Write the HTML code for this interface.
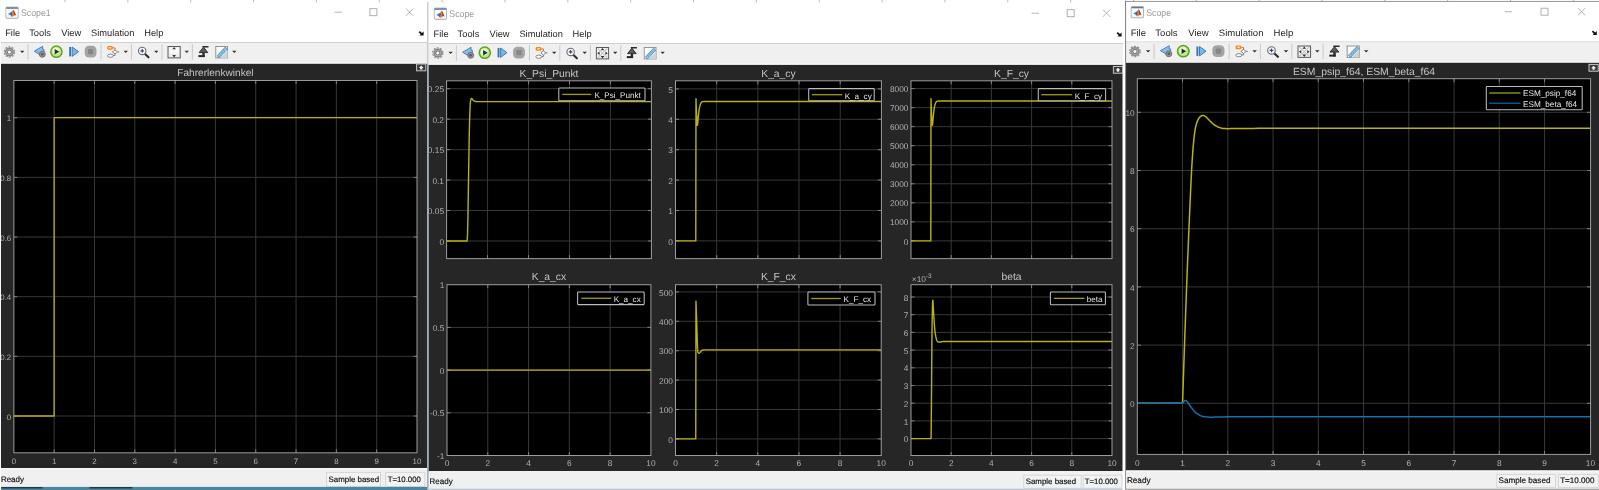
<!DOCTYPE html>
<html><head><meta charset="utf-8"><title>Scope</title>
<style>html,body{margin:0;padding:0;background:#fff;overflow:hidden}body{width:1599px;height:490px;font-family:"Liberation Sans",sans-serif}svg text{font-family:"Liberation Sans",sans-serif}</style></head>
<body>
<svg width="1599" height="490" viewBox="0 0 1599 490" font-family="Liberation Sans, sans-serif" text-rendering="geometricPrecision" style="display:block"><defs><filter id="bl" x="0" y="0" width="100%" height="100%" color-interpolation-filters="sRGB"><feGaussianBlur stdDeviation="0.52"/></filter></defs><g filter="url(#bl)">
<rect x="0.00" y="0.00" width="1599.00" height="490.00" fill="#ffffff" />
<rect x="0.00" y="0.00" width="428.00" height="43.00" fill="#ffffff" />
<rect x="5.95" y="7.10" width="12.20" height="11.20" fill="#f4f4f4" stroke="#a4a8ad" stroke-width="0.9" rx="0.6"/>
<rect x="6.45" y="9.10" width="11.20" height="6.00" fill="#ffffff" />
<rect x="6.25" y="7.30" width="11.60" height="1.50" fill="#4f7db0" />
<path d="M7.85 14.00L11.65 11.70L12.55 13.70L11.45 16.30L10.05 15.10Z" fill="#3f82c8"/>
<path d="M11.65 11.70C12.35 11.00 12.85 10.10 13.35 9.80C14.25 10.90 15.05 13.40 16.15 15.50C15.05 14.80 14.05 15.40 13.15 16.30L11.85 17.10L11.45 16.30L12.55 13.70Z" fill="#ee7a22"/>
<path d="M13.35 9.80C14.25 10.90 15.05 13.40 16.15 15.50C15.35 14.90 14.65 15.00 14.05 15.40C13.85 13.60 13.65 11.60 13.35 9.80Z" fill="#b5311c"/>
<path d="M11.45 16.30L12.55 13.70L11.65 11.70L10.85 14.50Z" fill="#2a4f9a" opacity="0.75"/>
<text transform="translate(20.90 16.00) scale(0.925 1)" font-size="9.5" fill="#9a9a9a">Scope1</text>
<line x1="334.60" y1="12.20" x2="342.00" y2="12.20" stroke="#b4b4b4" stroke-width="1" />
<rect x="369.90" y="8.70" width="7.00" height="7.00" fill="none" stroke="#a6a6a6" stroke-width="0.9"/>
<path d="M406.00 8.60l7.2 7.2M413.20 8.60l-7.2 7.2" stroke="#a8a8a8" stroke-width="0.9"/>
<g transform="translate(0.00 0) scale(1.0 1) translate(0.00 0)">
<text x="5.20" y="36.10" font-size="9.3" fill="#1e1e1e" text-anchor="start" >File</text>
<text x="29.20" y="36.10" font-size="9.3" fill="#1e1e1e" text-anchor="start" >Tools</text>
<text x="61.20" y="36.10" font-size="9.3" fill="#1e1e1e" text-anchor="start" >View</text>
<text x="91.00" y="36.10" font-size="9.3" fill="#1e1e1e" text-anchor="start" >Simulation</text>
<text x="144.20" y="36.10" font-size="9.3" fill="#1e1e1e" text-anchor="start" >Help</text>
</g>
<path d="M419.20 31.60l2.6 2.6" stroke="#111" stroke-width="1.7"/>
<path d="M423.60 31.40v4.2h-4.2z" fill="#111"/>
<rect x="0.00" y="42.00" width="428.00" height="1.00" fill="#cfcfcf" />
<rect x="0.00" y="43.00" width="428.00" height="20.20" fill="#f0f0f0" />
<rect x="0.00" y="62.40" width="428.00" height="1.00" fill="#f8f8f8" />
<g transform="translate(0.00 0) scale(1.0 1) translate(0.00 0)">
<circle cx="9.40" cy="52.00" r="5.1" fill="none" stroke="#8c8c8c" stroke-width="1.2" stroke-dasharray="2.0 1.2"/>
<circle cx="9.40" cy="52.00" r="4.5" fill="#878787"/>
<circle cx="9.40" cy="52.00" r="3.1" fill="#b9b9b9"/>
<circle cx="9.40" cy="52.00" r="2.5" fill="#7c7c7c"/>
<circle cx="9.40" cy="52.00" r="1.5" fill="#fafafa"/>
<path d="M20.00 50.70h4.4l-2.2 2.2z" fill="#333"/>
<line x1="28.00" y1="44.20" x2="28.00" y2="59.70" stroke="#c9c9c9" stroke-width="1" />
<path d="M34.20 51.20l8.5 -5v3.2h1.3v4.5h-1.3v2.6z" fill="#8dbbe6" stroke="#3f7fc0" stroke-width="0.9"/>
<circle cx="42.30" cy="54.30" r="3.0" fill="#909090" stroke="#6a6a6a" stroke-width="0.8"/>
<circle cx="42.30" cy="54.30" r="1.2" fill="#5a5a5a"/>
<circle cx="56.40" cy="51.70" r="5.6" fill="#b8e986" stroke="#5ea524" stroke-width="1.5"/>
<circle cx="55.90" cy="50.90" r="3.4" fill="#e9f9d4"/>
<path d="M54.70 49.00l4.6 2.7l-4.6 2.7z" fill="#2b2b2b"/>
<rect x="69.20" y="47.00" width="1.90" height="9.40" fill="#2f74b5" />
<path d="M72.20 47.00l6.3 4.7l-6.3 4.7z" fill="#7fb6e6" stroke="#2f74b5" stroke-width="0.9"/>
<rect x="84.70" y="45.80" width="11.80" height="11.80" fill="#a4a4a4" rx="4.2"/>
<rect x="88.00" y="49.10" width="5.20" height="5.20" fill="#868686" rx="0.8"/>
<line x1="101.00" y1="44.20" x2="101.00" y2="59.70" stroke="#c9c9c9" stroke-width="1" />
<rect x="107.30" y="46.10" width="5.60" height="3.60" fill="#f08a24" rx="1.2"/>
<rect x="108.70" y="47.00" width="2.80" height="1.40" fill="#ffd9a8" rx="0.6"/>
<path d="M113.00 47.90h2v2.6" fill="none" stroke="#d9642a" stroke-width="0.9"/>
<path d="M112.40 51.90l2.6 -2l2.6 2l-2.6 2z" fill="#fff" stroke="#6a6a6a" stroke-width="0.8"/>
<path d="M117.60 51.90h1.6" fill="none" stroke="#6a6a6a" stroke-width="0.8"/>
<path d="M115.00 53.90v1.6h-2" fill="none" stroke="#6a6a6a" stroke-width="0.8"/>
<ellipse cx="110.40" cy="55.70" rx="2.9" ry="1.6" fill="#fff" stroke="#6a6a6a" stroke-width="0.8"/>
<path d="M123.60 50.70h4.4l-2.2 2.2z" fill="#333"/>
<line x1="131.40" y1="44.20" x2="131.40" y2="59.70" stroke="#c9c9c9" stroke-width="1" />
<line x1="144.80" y1="53.70" x2="148.50" y2="57.30" stroke="#2e2e2e" stroke-width="2.1" stroke-linecap="round"/>
<circle cx="142.20" cy="50.90" r="3.7" fill="#f4f8fc" stroke="#6e6e6e" stroke-width="1.1"/>
<path d="M140.40 50.90h3.6M142.20 49.10v3.6" stroke="#3a4a66" stroke-width="1.1"/>
<path d="M154.10 50.70h4.4l-2.2 2.2z" fill="#333"/>
<line x1="162.00" y1="44.20" x2="162.00" y2="59.70" stroke="#c9c9c9" stroke-width="1" />
<rect x="168.00" y="46.50" width="12.20" height="11.40" fill="#ececec" stroke="#5c5c5c" stroke-width="1"/>
<rect x="169.20" y="47.70" width="9.80" height="6.00" fill="#fafafa" />
<path d="M174.10 47.00l1.8 2.3h-3.6zM174.10 57.40l1.8 -2.3h-3.6z" fill="#303030"/>
<path d="M184.60 50.70h4.4l-2.2 2.2z" fill="#333"/>
<line x1="192.40" y1="44.20" x2="192.40" y2="59.70" stroke="#c9c9c9" stroke-width="1" />
<rect x="202.40" y="46.00" width="6.10" height="1.50" fill="#2c2c2c" />
<path d="M203.50 47.20L207.80 52.60L199.10 52.60Z" fill="#5a5a5a" stroke="#262626" stroke-width="0.9" stroke-linejoin="round"/>
<rect x="202.30" y="52.60" width="2.40" height="4.40" fill="#2c2c2c" />
<rect x="198.40" y="55.10" width="6.30" height="2.00" fill="#262626" />
<rect x="215.80" y="46.50" width="11.80" height="11.40" fill="#fbfbfb" stroke="#8a8a8a" stroke-width="0.9"/>
<path d="M227.60 50.30v7.6h-7.6z" fill="#d2d2d2"/>
<path d="M217.00 55.90l8.2 -8.8l2.1 2l-8.2 8.8z" fill="#86c2e6" stroke="#4a88ba" stroke-width="0.8"/>
<path d="M219.60 54.30l0.9 0.9M221.50 52.30l0.9 0.9M223.40 50.30l0.9 0.9" stroke="#3d6f9c" stroke-width="0.6"/>
<path d="M232.10 50.70h4.4l-2.2 2.2z" fill="#333"/>
</g>
<rect x="1.00" y="63.80" width="426.00" height="404.20" fill="#262626" />
<rect x="13.85" y="80.50" width="403.15" height="372.30" fill="#000" />
<line x1="54.16" y1="80.50" x2="54.16" y2="452.80" stroke="#383838" stroke-width="1" />
<line x1="94.48" y1="80.50" x2="94.48" y2="452.80" stroke="#383838" stroke-width="1" />
<line x1="134.79" y1="80.50" x2="134.79" y2="452.80" stroke="#383838" stroke-width="1" />
<line x1="175.11" y1="80.50" x2="175.11" y2="452.80" stroke="#383838" stroke-width="1" />
<line x1="215.42" y1="80.50" x2="215.42" y2="452.80" stroke="#383838" stroke-width="1" />
<line x1="255.74" y1="80.50" x2="255.74" y2="452.80" stroke="#383838" stroke-width="1" />
<line x1="296.06" y1="80.50" x2="296.06" y2="452.80" stroke="#383838" stroke-width="1" />
<line x1="336.37" y1="80.50" x2="336.37" y2="452.80" stroke="#383838" stroke-width="1" />
<line x1="376.69" y1="80.50" x2="376.69" y2="452.80" stroke="#383838" stroke-width="1" />
<line x1="13.85" y1="416.00" x2="417.00" y2="416.00" stroke="#383838" stroke-width="1" />
<line x1="13.85" y1="356.34" x2="417.00" y2="356.34" stroke="#383838" stroke-width="1" />
<line x1="13.85" y1="296.68" x2="417.00" y2="296.68" stroke="#383838" stroke-width="1" />
<line x1="13.85" y1="237.02" x2="417.00" y2="237.02" stroke="#383838" stroke-width="1" />
<line x1="13.85" y1="177.36" x2="417.00" y2="177.36" stroke="#383838" stroke-width="1" />
<line x1="13.85" y1="117.70" x2="417.00" y2="117.70" stroke="#383838" stroke-width="1" />
<line x1="54.16" y1="452.80" x2="54.16" y2="449.30" stroke="#808080" stroke-width="1" />
<line x1="54.16" y1="80.50" x2="54.16" y2="84.00" stroke="#808080" stroke-width="1" />
<line x1="94.48" y1="452.80" x2="94.48" y2="449.30" stroke="#808080" stroke-width="1" />
<line x1="94.48" y1="80.50" x2="94.48" y2="84.00" stroke="#808080" stroke-width="1" />
<line x1="134.79" y1="452.80" x2="134.79" y2="449.30" stroke="#808080" stroke-width="1" />
<line x1="134.79" y1="80.50" x2="134.79" y2="84.00" stroke="#808080" stroke-width="1" />
<line x1="175.11" y1="452.80" x2="175.11" y2="449.30" stroke="#808080" stroke-width="1" />
<line x1="175.11" y1="80.50" x2="175.11" y2="84.00" stroke="#808080" stroke-width="1" />
<line x1="215.42" y1="452.80" x2="215.42" y2="449.30" stroke="#808080" stroke-width="1" />
<line x1="215.42" y1="80.50" x2="215.42" y2="84.00" stroke="#808080" stroke-width="1" />
<line x1="255.74" y1="452.80" x2="255.74" y2="449.30" stroke="#808080" stroke-width="1" />
<line x1="255.74" y1="80.50" x2="255.74" y2="84.00" stroke="#808080" stroke-width="1" />
<line x1="296.06" y1="452.80" x2="296.06" y2="449.30" stroke="#808080" stroke-width="1" />
<line x1="296.06" y1="80.50" x2="296.06" y2="84.00" stroke="#808080" stroke-width="1" />
<line x1="336.37" y1="452.80" x2="336.37" y2="449.30" stroke="#808080" stroke-width="1" />
<line x1="336.37" y1="80.50" x2="336.37" y2="84.00" stroke="#808080" stroke-width="1" />
<line x1="376.69" y1="452.80" x2="376.69" y2="449.30" stroke="#808080" stroke-width="1" />
<line x1="376.69" y1="80.50" x2="376.69" y2="84.00" stroke="#808080" stroke-width="1" />
<line x1="13.85" y1="416.00" x2="17.35" y2="416.00" stroke="#808080" stroke-width="1" />
<line x1="417.00" y1="416.00" x2="413.50" y2="416.00" stroke="#808080" stroke-width="1" />
<line x1="13.85" y1="356.34" x2="17.35" y2="356.34" stroke="#808080" stroke-width="1" />
<line x1="417.00" y1="356.34" x2="413.50" y2="356.34" stroke="#808080" stroke-width="1" />
<line x1="13.85" y1="296.68" x2="17.35" y2="296.68" stroke="#808080" stroke-width="1" />
<line x1="417.00" y1="296.68" x2="413.50" y2="296.68" stroke="#808080" stroke-width="1" />
<line x1="13.85" y1="237.02" x2="17.35" y2="237.02" stroke="#808080" stroke-width="1" />
<line x1="417.00" y1="237.02" x2="413.50" y2="237.02" stroke="#808080" stroke-width="1" />
<line x1="13.85" y1="177.36" x2="17.35" y2="177.36" stroke="#808080" stroke-width="1" />
<line x1="417.00" y1="177.36" x2="413.50" y2="177.36" stroke="#808080" stroke-width="1" />
<line x1="13.85" y1="117.70" x2="17.35" y2="117.70" stroke="#808080" stroke-width="1" />
<line x1="417.00" y1="117.70" x2="413.50" y2="117.70" stroke="#808080" stroke-width="1" />
<path d="M13.85 416.00 L54.16 416.00 L54.16 117.70 L417.00 117.70" fill="none" stroke="#bab213" stroke-width="1.3" stroke-linejoin="round"/>
<rect x="13.85" y="80.50" width="403.15" height="372.30" fill="none" stroke="#9c9c9c" stroke-width="1"/>
<text x="13.85" y="463.50" font-size="7.9" fill="#b0b0b0" text-anchor="middle" >0</text>
<text x="54.16" y="463.50" font-size="7.9" fill="#b0b0b0" text-anchor="middle" >1</text>
<text x="94.48" y="463.50" font-size="7.9" fill="#b0b0b0" text-anchor="middle" >2</text>
<text x="134.79" y="463.50" font-size="7.9" fill="#b0b0b0" text-anchor="middle" >3</text>
<text x="175.11" y="463.50" font-size="7.9" fill="#b0b0b0" text-anchor="middle" >4</text>
<text x="215.42" y="463.50" font-size="7.9" fill="#b0b0b0" text-anchor="middle" >5</text>
<text x="255.74" y="463.50" font-size="7.9" fill="#b0b0b0" text-anchor="middle" >6</text>
<text x="296.06" y="463.50" font-size="7.9" fill="#b0b0b0" text-anchor="middle" >7</text>
<text x="336.37" y="463.50" font-size="7.9" fill="#b0b0b0" text-anchor="middle" >8</text>
<text x="376.69" y="463.50" font-size="7.9" fill="#b0b0b0" text-anchor="middle" >9</text>
<text x="417.00" y="463.50" font-size="7.9" fill="#b0b0b0" text-anchor="middle" >10</text>
<text x="11.25" y="419.60" font-size="7.9" fill="#b0b0b0" text-anchor="end" >0</text>
<text x="11.25" y="359.94" font-size="7.9" fill="#b0b0b0" text-anchor="end" >0.2</text>
<text x="11.25" y="300.28" font-size="7.9" fill="#b0b0b0" text-anchor="end" >0.4</text>
<text x="11.25" y="240.62" font-size="7.9" fill="#b0b0b0" text-anchor="end" >0.6</text>
<text x="11.25" y="180.96" font-size="7.9" fill="#b0b0b0" text-anchor="end" >0.8</text>
<text x="11.25" y="121.30" font-size="7.9" fill="#b0b0b0" text-anchor="end" >1</text>
<text x="215.43" y="76.20" font-size="10.1" fill="#c4c4c4" text-anchor="middle" >Fahrerlenkwinkel</text>
<rect x="416.60" y="64.00" width="9.20" height="6.80" fill="#3a3a3a" stroke="#c6c6c6" stroke-width="1.0"/>
<path d="M418.80 67.90l2.4 -2.5l2.4 2.5h-1.3v1.5h-2.2v-1.5z" fill="#f0f0f0"/>
<rect x="0.00" y="468.20" width="428.00" height="19.00" fill="#f0f0f0" />
<rect x="0.00" y="468.20" width="428.00" height="0.90" fill="#fbfbfb" />
<text x="0.90" y="481.80" font-size="8.0" fill="#141414" text-anchor="start" stroke="#141414" stroke-width="0.18">Ready</text>
<rect x="326.60" y="472.40" width="54.00" height="14.20" fill="#f3f3f3" stroke="#d4d4d4" stroke-width="0.9"/>
<text x="328.60" y="481.80" font-size="7.9" fill="#141414" text-anchor="start" stroke="#141414" stroke-width="0.18">Sample based</text>
<rect x="385.60" y="472.40" width="39.20" height="14.20" fill="#f3f3f3" stroke="#d4d4d4" stroke-width="0.9"/>
<text x="387.70" y="481.80" font-size="7.8" fill="#141414" text-anchor="start" stroke="#141414" stroke-width="0.18">T=10.000</text>
<rect x="0.00" y="486.90" width="428.00" height="3.10" fill="#4688a4" />
<rect x="1.50" y="487.00" width="41.00" height="1.50" fill="#22384a" />
<rect x="89.50" y="487.00" width="43.00" height="1.50" fill="#22384a" />
<rect x="0.00" y="0.00" width="1.00" height="490.00" fill="#fafafa" />
<rect x="427.00" y="2.00" width="1.70" height="488.00" fill="#a3afbb" />
<rect x="427.00" y="2.00" width="1.70" height="62.00" fill="#c3ccd5" />
<rect x="428.40" y="0.00" width="694.70" height="44.00" fill="#ffffff" />
<rect x="434.35" y="8.10" width="12.20" height="11.20" fill="#f4f4f4" stroke="#a4a8ad" stroke-width="0.9" rx="0.6"/>
<rect x="434.85" y="10.10" width="11.20" height="6.00" fill="#ffffff" />
<rect x="434.65" y="8.30" width="11.60" height="1.50" fill="#4f7db0" />
<path d="M436.25 15.00L440.05 12.70L440.95 14.70L439.85 17.30L438.45 16.10Z" fill="#3f82c8"/>
<path d="M440.05 12.70C440.75 12.00 441.25 11.10 441.75 10.80C442.65 11.90 443.45 14.40 444.55 16.50C443.45 15.80 442.45 16.40 441.55 17.30L440.25 18.10L439.85 17.30L440.95 14.70Z" fill="#ee7a22"/>
<path d="M441.75 10.80C442.65 11.90 443.45 14.40 444.55 16.50C443.75 15.90 443.05 16.00 442.45 16.40C442.25 14.60 442.05 12.60 441.75 10.80Z" fill="#b5311c"/>
<path d="M439.85 17.30L440.95 14.70L440.05 12.70L439.25 15.50Z" fill="#2a4f9a" opacity="0.75"/>
<text transform="translate(449.30 17.00) scale(0.925 1)" font-size="9.5" fill="#9a9a9a">Scope</text>
<line x1="1031.60" y1="13.20" x2="1039.00" y2="13.20" stroke="#b4b4b4" stroke-width="1" />
<rect x="1067.20" y="9.70" width="7.00" height="7.00" fill="none" stroke="#a6a6a6" stroke-width="0.9"/>
<path d="M1102.90 9.60l7.2 7.2M1110.10 9.60l-7.2 7.2" stroke="#a8a8a8" stroke-width="0.9"/>
<g transform="translate(428.40 0) scale(1.0 1) translate(-428.40 0)">
<text x="433.60" y="37.10" font-size="9.3" fill="#1e1e1e" text-anchor="start" >File</text>
<text x="457.60" y="37.10" font-size="9.3" fill="#1e1e1e" text-anchor="start" >Tools</text>
<text x="489.60" y="37.10" font-size="9.3" fill="#1e1e1e" text-anchor="start" >View</text>
<text x="519.40" y="37.10" font-size="9.3" fill="#1e1e1e" text-anchor="start" >Simulation</text>
<text x="572.60" y="37.10" font-size="9.3" fill="#1e1e1e" text-anchor="start" >Help</text>
</g>
<path d="M1117.20 32.60l2.6 2.6" stroke="#111" stroke-width="1.7"/>
<path d="M1121.60 32.40v4.2h-4.2z" fill="#111"/>
<rect x="428.40" y="43.00" width="694.70" height="1.00" fill="#cfcfcf" />
<rect x="428.40" y="44.00" width="694.70" height="20.20" fill="#f0f0f0" />
<rect x="428.40" y="63.40" width="694.70" height="1.00" fill="#f8f8f8" />
<g transform="translate(428.40 0) scale(1.0 1) translate(-428.40 0)">
<circle cx="437.80" cy="53.00" r="5.1" fill="none" stroke="#8c8c8c" stroke-width="1.2" stroke-dasharray="2.0 1.2"/>
<circle cx="437.80" cy="53.00" r="4.5" fill="#878787"/>
<circle cx="437.80" cy="53.00" r="3.1" fill="#b9b9b9"/>
<circle cx="437.80" cy="53.00" r="2.5" fill="#7c7c7c"/>
<circle cx="437.80" cy="53.00" r="1.5" fill="#fafafa"/>
<path d="M448.40 51.70h4.4l-2.2 2.2z" fill="#333"/>
<line x1="456.40" y1="45.20" x2="456.40" y2="60.70" stroke="#c9c9c9" stroke-width="1" />
<path d="M462.60 52.20l8.5 -5v3.2h1.3v4.5h-1.3v2.6z" fill="#8dbbe6" stroke="#3f7fc0" stroke-width="0.9"/>
<circle cx="470.70" cy="55.30" r="3.0" fill="#909090" stroke="#6a6a6a" stroke-width="0.8"/>
<circle cx="470.70" cy="55.30" r="1.2" fill="#5a5a5a"/>
<circle cx="484.80" cy="52.70" r="5.6" fill="#b8e986" stroke="#5ea524" stroke-width="1.5"/>
<circle cx="484.30" cy="51.90" r="3.4" fill="#e9f9d4"/>
<path d="M483.10 50.00l4.6 2.7l-4.6 2.7z" fill="#2b2b2b"/>
<rect x="497.60" y="48.00" width="1.90" height="9.40" fill="#2f74b5" />
<path d="M500.60 48.00l6.3 4.7l-6.3 4.7z" fill="#7fb6e6" stroke="#2f74b5" stroke-width="0.9"/>
<rect x="513.10" y="46.80" width="11.80" height="11.80" fill="#a4a4a4" rx="4.2"/>
<rect x="516.40" y="50.10" width="5.20" height="5.20" fill="#868686" rx="0.8"/>
<line x1="529.40" y1="45.20" x2="529.40" y2="60.70" stroke="#c9c9c9" stroke-width="1" />
<rect x="535.70" y="47.10" width="5.60" height="3.60" fill="#f08a24" rx="1.2"/>
<rect x="537.10" y="48.00" width="2.80" height="1.40" fill="#ffd9a8" rx="0.6"/>
<path d="M541.40 48.90h2v2.6" fill="none" stroke="#d9642a" stroke-width="0.9"/>
<path d="M540.80 52.90l2.6 -2l2.6 2l-2.6 2z" fill="#fff" stroke="#6a6a6a" stroke-width="0.8"/>
<path d="M546.00 52.90h1.6" fill="none" stroke="#6a6a6a" stroke-width="0.8"/>
<path d="M543.40 54.90v1.6h-2" fill="none" stroke="#6a6a6a" stroke-width="0.8"/>
<ellipse cx="538.80" cy="56.70" rx="2.9" ry="1.6" fill="#fff" stroke="#6a6a6a" stroke-width="0.8"/>
<path d="M552.00 51.70h4.4l-2.2 2.2z" fill="#333"/>
<line x1="559.80" y1="45.20" x2="559.80" y2="60.70" stroke="#c9c9c9" stroke-width="1" />
<line x1="573.20" y1="54.70" x2="576.90" y2="58.30" stroke="#2e2e2e" stroke-width="2.1" stroke-linecap="round"/>
<circle cx="570.60" cy="51.90" r="3.7" fill="#f4f8fc" stroke="#6e6e6e" stroke-width="1.1"/>
<path d="M568.80 51.90h3.6M570.60 50.10v3.6" stroke="#3a4a66" stroke-width="1.1"/>
<path d="M582.50 51.70h4.4l-2.2 2.2z" fill="#333"/>
<line x1="590.40" y1="45.20" x2="590.40" y2="60.70" stroke="#c9c9c9" stroke-width="1" />
<rect x="596.40" y="47.50" width="12.20" height="11.40" fill="#ececec" stroke="#5c5c5c" stroke-width="1"/>
<rect x="597.60" y="48.70" width="9.80" height="6.00" fill="#fafafa" />
<path d="M597.80 48.70L607.20 57.70M607.20 48.70L597.80 57.70" stroke="#c4c4c4" stroke-width="1.1"/>
<path d="M597.30 53.20l2.3 -1.7v3.4zM607.70 53.20l-2.3 -1.7v3.4z" fill="#303030"/>
<path d="M602.50 48.00l1.8 2.3h-3.6zM602.50 58.40l1.8 -2.3h-3.6z" fill="#303030"/>
<path d="M613.00 51.70h4.4l-2.2 2.2z" fill="#333"/>
<line x1="620.80" y1="45.20" x2="620.80" y2="60.70" stroke="#c9c9c9" stroke-width="1" />
<rect x="630.80" y="47.00" width="6.10" height="1.50" fill="#2c2c2c" />
<path d="M631.90 48.20L636.20 53.60L627.50 53.60Z" fill="#5a5a5a" stroke="#262626" stroke-width="0.9" stroke-linejoin="round"/>
<rect x="630.70" y="53.60" width="2.40" height="4.40" fill="#2c2c2c" />
<rect x="626.80" y="56.10" width="6.30" height="2.00" fill="#262626" />
<rect x="644.20" y="47.50" width="11.80" height="11.40" fill="#fbfbfb" stroke="#8a8a8a" stroke-width="0.9"/>
<path d="M656.00 51.30v7.6h-7.6z" fill="#d2d2d2"/>
<path d="M645.40 56.90l8.2 -8.8l2.1 2l-8.2 8.8z" fill="#86c2e6" stroke="#4a88ba" stroke-width="0.8"/>
<path d="M648.00 55.30l0.9 0.9M649.90 53.30l0.9 0.9M651.80 51.30l0.9 0.9" stroke="#3d6f9c" stroke-width="0.6"/>
<path d="M660.50 51.70h4.4l-2.2 2.2z" fill="#333"/>
</g>
<rect x="428.70" y="64.90" width="693.80" height="406.50" fill="#262626" />
<rect x="446.60" y="80.80" width="204.80" height="177.80" fill="#000" />
<line x1="487.56" y1="80.80" x2="487.56" y2="258.60" stroke="#383838" stroke-width="1" />
<line x1="528.52" y1="80.80" x2="528.52" y2="258.60" stroke="#383838" stroke-width="1" />
<line x1="569.48" y1="80.80" x2="569.48" y2="258.60" stroke="#383838" stroke-width="1" />
<line x1="610.44" y1="80.80" x2="610.44" y2="258.60" stroke="#383838" stroke-width="1" />
<line x1="446.60" y1="241.00" x2="651.40" y2="241.00" stroke="#383838" stroke-width="1" />
<line x1="446.60" y1="210.54" x2="651.40" y2="210.54" stroke="#383838" stroke-width="1" />
<line x1="446.60" y1="180.08" x2="651.40" y2="180.08" stroke="#383838" stroke-width="1" />
<line x1="446.60" y1="149.62" x2="651.40" y2="149.62" stroke="#383838" stroke-width="1" />
<line x1="446.60" y1="119.16" x2="651.40" y2="119.16" stroke="#383838" stroke-width="1" />
<line x1="446.60" y1="88.70" x2="651.40" y2="88.70" stroke="#383838" stroke-width="1" />
<line x1="487.56" y1="258.60" x2="487.56" y2="255.10" stroke="#808080" stroke-width="1" />
<line x1="487.56" y1="80.80" x2="487.56" y2="84.30" stroke="#808080" stroke-width="1" />
<line x1="528.52" y1="258.60" x2="528.52" y2="255.10" stroke="#808080" stroke-width="1" />
<line x1="528.52" y1="80.80" x2="528.52" y2="84.30" stroke="#808080" stroke-width="1" />
<line x1="569.48" y1="258.60" x2="569.48" y2="255.10" stroke="#808080" stroke-width="1" />
<line x1="569.48" y1="80.80" x2="569.48" y2="84.30" stroke="#808080" stroke-width="1" />
<line x1="610.44" y1="258.60" x2="610.44" y2="255.10" stroke="#808080" stroke-width="1" />
<line x1="610.44" y1="80.80" x2="610.44" y2="84.30" stroke="#808080" stroke-width="1" />
<line x1="446.60" y1="241.00" x2="450.10" y2="241.00" stroke="#808080" stroke-width="1" />
<line x1="651.40" y1="241.00" x2="647.90" y2="241.00" stroke="#808080" stroke-width="1" />
<line x1="446.60" y1="210.54" x2="450.10" y2="210.54" stroke="#808080" stroke-width="1" />
<line x1="651.40" y1="210.54" x2="647.90" y2="210.54" stroke="#808080" stroke-width="1" />
<line x1="446.60" y1="180.08" x2="450.10" y2="180.08" stroke="#808080" stroke-width="1" />
<line x1="651.40" y1="180.08" x2="647.90" y2="180.08" stroke="#808080" stroke-width="1" />
<line x1="446.60" y1="149.62" x2="450.10" y2="149.62" stroke="#808080" stroke-width="1" />
<line x1="651.40" y1="149.62" x2="647.90" y2="149.62" stroke="#808080" stroke-width="1" />
<line x1="446.60" y1="119.16" x2="450.10" y2="119.16" stroke="#808080" stroke-width="1" />
<line x1="651.40" y1="119.16" x2="647.90" y2="119.16" stroke="#808080" stroke-width="1" />
<line x1="446.60" y1="88.70" x2="450.10" y2="88.70" stroke="#808080" stroke-width="1" />
<line x1="651.40" y1="88.70" x2="647.90" y2="88.70" stroke="#808080" stroke-width="1" />
<path d="M446.60 241.00 L467.08 241.00 L467.08 241.00 L467.13 240.31 L467.19 239.67 L467.26 238.93 L467.34 237.95 L467.42 236.60 L467.51 234.72 L467.60 232.17 L467.69 228.82 L467.79 224.47 L467.88 219.20 L467.99 213.22 L468.09 206.73 L468.20 199.96 L468.30 193.12 L468.41 186.42 L468.51 180.08 L468.62 173.83 L468.72 167.35 L468.82 160.79 L468.92 154.27 L469.03 147.92 L469.13 141.90 L469.23 136.33 L469.33 131.34 L469.44 126.91 L469.54 122.87 L469.64 119.21 L469.74 115.90 L469.84 112.93 L469.95 110.26 L470.05 107.88 L470.15 105.76 L470.25 104.00 L470.36 102.68 L470.46 101.71 L470.56 101.01 L470.66 100.51 L470.77 100.12 L470.87 99.76 L470.97 99.36 L471.07 98.98 L471.17 98.72 L471.27 98.57 L471.37 98.49 L471.47 98.47 L471.57 98.49 L471.68 98.53 L471.79 98.57 L471.90 98.62 L472.02 98.73 L472.13 98.87 L472.25 99.04 L472.38 99.23 L472.51 99.43 L472.66 99.62 L472.81 99.79 L472.99 99.96 L473.17 100.14 L473.37 100.32 L473.57 100.51 L473.78 100.69 L474.00 100.85 L474.22 101.00 L474.45 101.13 L474.67 101.23 L474.87 101.31 L475.06 101.37 L475.27 101.42 L475.50 101.46 L475.78 101.49 L476.10 101.52 L476.50 101.55 L477.01 101.58 L477.64 101.60 L478.35 101.61 L479.09 101.61 L479.81 101.61 L480.47 101.61 L481.02 101.61 L481.42 101.62 L651.40 101.62" fill="none" stroke="#bab213" stroke-width="1.4" stroke-linejoin="round"/>
<rect x="446.60" y="80.80" width="204.80" height="177.80" fill="none" stroke="#9c9c9c" stroke-width="1"/>
<text x="444.00" y="244.60" font-size="8.3" fill="#b0b0b0" text-anchor="end" >0</text>
<text x="444.00" y="214.14" font-size="8.3" fill="#b0b0b0" text-anchor="end" >0.05</text>
<text x="444.00" y="183.68" font-size="8.3" fill="#b0b0b0" text-anchor="end" >0.1</text>
<text x="444.00" y="153.22" font-size="8.3" fill="#b0b0b0" text-anchor="end" >0.15</text>
<text x="444.00" y="122.76" font-size="8.3" fill="#b0b0b0" text-anchor="end" >0.2</text>
<text x="444.00" y="92.30" font-size="8.3" fill="#b0b0b0" text-anchor="end" >0.25</text>
<text x="549.00" y="77.20" font-size="10.3" fill="#c4c4c4" text-anchor="middle" >K_Psi_Punkt</text>
<rect x="558.80" y="88.00" width="86.20" height="12.80" fill="#000" stroke="#bcbcbc" stroke-width="1.05" rx="0.8"/>
<line x1="562.20" y1="94.40" x2="591.40" y2="94.40" stroke="#bab213" stroke-width="1.3" opacity="0.88"/>
<text x="594.40" y="98.30" font-size="8.1" fill="#e6e6e6" text-anchor="start" >K_Psi_Punkt</text>
<rect x="675.50" y="80.80" width="205.90" height="177.80" fill="#000" />
<line x1="716.68" y1="80.80" x2="716.68" y2="258.60" stroke="#383838" stroke-width="1" />
<line x1="757.86" y1="80.80" x2="757.86" y2="258.60" stroke="#383838" stroke-width="1" />
<line x1="799.04" y1="80.80" x2="799.04" y2="258.60" stroke="#383838" stroke-width="1" />
<line x1="840.22" y1="80.80" x2="840.22" y2="258.60" stroke="#383838" stroke-width="1" />
<line x1="675.50" y1="240.90" x2="881.40" y2="240.90" stroke="#383838" stroke-width="1" />
<line x1="675.50" y1="210.50" x2="881.40" y2="210.50" stroke="#383838" stroke-width="1" />
<line x1="675.50" y1="180.10" x2="881.40" y2="180.10" stroke="#383838" stroke-width="1" />
<line x1="675.50" y1="149.70" x2="881.40" y2="149.70" stroke="#383838" stroke-width="1" />
<line x1="675.50" y1="119.30" x2="881.40" y2="119.30" stroke="#383838" stroke-width="1" />
<line x1="675.50" y1="88.90" x2="881.40" y2="88.90" stroke="#383838" stroke-width="1" />
<line x1="716.68" y1="258.60" x2="716.68" y2="255.10" stroke="#808080" stroke-width="1" />
<line x1="716.68" y1="80.80" x2="716.68" y2="84.30" stroke="#808080" stroke-width="1" />
<line x1="757.86" y1="258.60" x2="757.86" y2="255.10" stroke="#808080" stroke-width="1" />
<line x1="757.86" y1="80.80" x2="757.86" y2="84.30" stroke="#808080" stroke-width="1" />
<line x1="799.04" y1="258.60" x2="799.04" y2="255.10" stroke="#808080" stroke-width="1" />
<line x1="799.04" y1="80.80" x2="799.04" y2="84.30" stroke="#808080" stroke-width="1" />
<line x1="840.22" y1="258.60" x2="840.22" y2="255.10" stroke="#808080" stroke-width="1" />
<line x1="840.22" y1="80.80" x2="840.22" y2="84.30" stroke="#808080" stroke-width="1" />
<line x1="675.50" y1="240.90" x2="679.00" y2="240.90" stroke="#808080" stroke-width="1" />
<line x1="881.40" y1="240.90" x2="877.90" y2="240.90" stroke="#808080" stroke-width="1" />
<line x1="675.50" y1="210.50" x2="679.00" y2="210.50" stroke="#808080" stroke-width="1" />
<line x1="881.40" y1="210.50" x2="877.90" y2="210.50" stroke="#808080" stroke-width="1" />
<line x1="675.50" y1="180.10" x2="679.00" y2="180.10" stroke="#808080" stroke-width="1" />
<line x1="881.40" y1="180.10" x2="877.90" y2="180.10" stroke="#808080" stroke-width="1" />
<line x1="675.50" y1="149.70" x2="679.00" y2="149.70" stroke="#808080" stroke-width="1" />
<line x1="881.40" y1="149.70" x2="877.90" y2="149.70" stroke="#808080" stroke-width="1" />
<line x1="675.50" y1="119.30" x2="679.00" y2="119.30" stroke="#808080" stroke-width="1" />
<line x1="881.40" y1="119.30" x2="877.90" y2="119.30" stroke="#808080" stroke-width="1" />
<line x1="675.50" y1="88.90" x2="679.00" y2="88.90" stroke="#808080" stroke-width="1" />
<line x1="881.40" y1="88.90" x2="877.90" y2="88.90" stroke="#808080" stroke-width="1" />
<path d="M675.50 240.90 L695.78 240.90 L695.99 98.63 L695.99 98.63 L696.03 99.78 L696.08 101.34 L696.14 103.19 L696.21 105.24 L696.28 107.37 L696.35 109.49 L696.43 111.47 L696.50 113.22 L696.57 114.84 L696.65 116.47 L696.73 118.07 L696.81 119.60 L696.89 121.02 L696.97 122.28 L697.05 123.34 L697.12 124.16 L697.19 124.74 L697.25 125.12 L697.31 125.31 L697.37 125.34 L697.43 125.22 L697.49 124.98 L697.56 124.62 L697.63 124.16 L697.71 123.56 L697.79 122.77 L697.87 121.83 L697.95 120.78 L698.04 119.66 L698.13 118.51 L698.24 117.36 L698.35 116.26 L698.48 115.15 L698.62 113.96 L698.76 112.73 L698.91 111.49 L699.07 110.28 L699.24 109.13 L699.41 108.07 L699.59 107.14 L699.77 106.33 L699.96 105.60 L700.15 104.94 L700.35 104.36 L700.56 103.83 L700.77 103.37 L701.00 102.95 L701.24 102.58 L701.47 102.27 L701.70 102.04 L701.92 101.88 L702.16 101.76 L702.43 101.68 L702.73 101.63 L703.09 101.57 L703.50 101.52 L704.03 101.47 L704.67 101.44 L705.38 101.44 L706.11 101.45 L706.84 101.47 L707.49 101.49 L708.04 101.51 L708.44 101.52 L881.40 101.52" fill="none" stroke="#bab213" stroke-width="1.4" stroke-linejoin="round"/>
<rect x="675.50" y="80.80" width="205.90" height="177.80" fill="none" stroke="#9c9c9c" stroke-width="1"/>
<text x="672.90" y="244.50" font-size="8.3" fill="#b0b0b0" text-anchor="end" >0</text>
<text x="672.90" y="214.10" font-size="8.3" fill="#b0b0b0" text-anchor="end" >1</text>
<text x="672.90" y="183.70" font-size="8.3" fill="#b0b0b0" text-anchor="end" >2</text>
<text x="672.90" y="153.30" font-size="8.3" fill="#b0b0b0" text-anchor="end" >3</text>
<text x="672.90" y="122.90" font-size="8.3" fill="#b0b0b0" text-anchor="end" >4</text>
<text x="672.90" y="92.50" font-size="8.3" fill="#b0b0b0" text-anchor="end" >5</text>
<text x="778.45" y="77.20" font-size="10.3" fill="#c4c4c4" text-anchor="middle" >K_a_cy</text>
<rect x="808.70" y="88.60" width="65.50" height="12.20" fill="#000" stroke="#bcbcbc" stroke-width="1.05" rx="0.8"/>
<line x1="812.10" y1="94.70" x2="842.10" y2="94.70" stroke="#bab213" stroke-width="1.3" opacity="0.88"/>
<text x="844.70" y="98.60" font-size="8.1" fill="#e6e6e6" text-anchor="start" >K_a_cy</text>
<rect x="911.00" y="80.80" width="201.00" height="177.80" fill="#000" />
<line x1="951.20" y1="80.80" x2="951.20" y2="258.60" stroke="#383838" stroke-width="1" />
<line x1="991.40" y1="80.80" x2="991.40" y2="258.60" stroke="#383838" stroke-width="1" />
<line x1="1031.60" y1="80.80" x2="1031.60" y2="258.60" stroke="#383838" stroke-width="1" />
<line x1="1071.80" y1="80.80" x2="1071.80" y2="258.60" stroke="#383838" stroke-width="1" />
<line x1="911.00" y1="240.90" x2="1112.00" y2="240.90" stroke="#383838" stroke-width="1" />
<line x1="911.00" y1="221.86" x2="1112.00" y2="221.86" stroke="#383838" stroke-width="1" />
<line x1="911.00" y1="202.82" x2="1112.00" y2="202.82" stroke="#383838" stroke-width="1" />
<line x1="911.00" y1="183.78" x2="1112.00" y2="183.78" stroke="#383838" stroke-width="1" />
<line x1="911.00" y1="164.74" x2="1112.00" y2="164.74" stroke="#383838" stroke-width="1" />
<line x1="911.00" y1="145.70" x2="1112.00" y2="145.70" stroke="#383838" stroke-width="1" />
<line x1="911.00" y1="126.66" x2="1112.00" y2="126.66" stroke="#383838" stroke-width="1" />
<line x1="911.00" y1="107.62" x2="1112.00" y2="107.62" stroke="#383838" stroke-width="1" />
<line x1="911.00" y1="88.58" x2="1112.00" y2="88.58" stroke="#383838" stroke-width="1" />
<line x1="951.20" y1="258.60" x2="951.20" y2="255.10" stroke="#808080" stroke-width="1" />
<line x1="951.20" y1="80.80" x2="951.20" y2="84.30" stroke="#808080" stroke-width="1" />
<line x1="991.40" y1="258.60" x2="991.40" y2="255.10" stroke="#808080" stroke-width="1" />
<line x1="991.40" y1="80.80" x2="991.40" y2="84.30" stroke="#808080" stroke-width="1" />
<line x1="1031.60" y1="258.60" x2="1031.60" y2="255.10" stroke="#808080" stroke-width="1" />
<line x1="1031.60" y1="80.80" x2="1031.60" y2="84.30" stroke="#808080" stroke-width="1" />
<line x1="1071.80" y1="258.60" x2="1071.80" y2="255.10" stroke="#808080" stroke-width="1" />
<line x1="1071.80" y1="80.80" x2="1071.80" y2="84.30" stroke="#808080" stroke-width="1" />
<line x1="911.00" y1="240.90" x2="914.50" y2="240.90" stroke="#808080" stroke-width="1" />
<line x1="1112.00" y1="240.90" x2="1108.50" y2="240.90" stroke="#808080" stroke-width="1" />
<line x1="911.00" y1="221.86" x2="914.50" y2="221.86" stroke="#808080" stroke-width="1" />
<line x1="1112.00" y1="221.86" x2="1108.50" y2="221.86" stroke="#808080" stroke-width="1" />
<line x1="911.00" y1="202.82" x2="914.50" y2="202.82" stroke="#808080" stroke-width="1" />
<line x1="1112.00" y1="202.82" x2="1108.50" y2="202.82" stroke="#808080" stroke-width="1" />
<line x1="911.00" y1="183.78" x2="914.50" y2="183.78" stroke="#808080" stroke-width="1" />
<line x1="1112.00" y1="183.78" x2="1108.50" y2="183.78" stroke="#808080" stroke-width="1" />
<line x1="911.00" y1="164.74" x2="914.50" y2="164.74" stroke="#808080" stroke-width="1" />
<line x1="1112.00" y1="164.74" x2="1108.50" y2="164.74" stroke="#808080" stroke-width="1" />
<line x1="911.00" y1="145.70" x2="914.50" y2="145.70" stroke="#808080" stroke-width="1" />
<line x1="1112.00" y1="145.70" x2="1108.50" y2="145.70" stroke="#808080" stroke-width="1" />
<line x1="911.00" y1="126.66" x2="914.50" y2="126.66" stroke="#808080" stroke-width="1" />
<line x1="1112.00" y1="126.66" x2="1108.50" y2="126.66" stroke="#808080" stroke-width="1" />
<line x1="911.00" y1="107.62" x2="914.50" y2="107.62" stroke="#808080" stroke-width="1" />
<line x1="1112.00" y1="107.62" x2="1108.50" y2="107.62" stroke="#808080" stroke-width="1" />
<line x1="911.00" y1="88.58" x2="914.50" y2="88.58" stroke="#808080" stroke-width="1" />
<line x1="1112.00" y1="88.58" x2="1108.50" y2="88.58" stroke="#808080" stroke-width="1" />
<path d="M911.00 240.90 L930.80 240.90 L931.00 98.67 L931.00 98.67 L931.04 99.83 L931.09 101.40 L931.15 103.27 L931.21 105.34 L931.28 107.48 L931.36 109.60 L931.43 111.59 L931.50 113.33 L931.57 114.93 L931.65 116.53 L931.73 118.09 L931.80 119.58 L931.88 120.95 L931.96 122.17 L932.03 123.20 L932.11 123.99 L932.17 124.56 L932.23 124.93 L932.29 125.13 L932.35 125.16 L932.41 125.05 L932.47 124.81 L932.54 124.45 L932.61 123.99 L932.68 123.39 L932.76 122.59 L932.83 121.64 L932.92 120.58 L933.00 119.45 L933.10 118.28 L933.20 117.12 L933.31 116.00 L933.43 114.86 L933.57 113.65 L933.71 112.39 L933.86 111.12 L934.01 109.88 L934.18 108.70 L934.34 107.62 L934.52 106.67 L934.69 105.84 L934.88 105.11 L935.06 104.45 L935.26 103.87 L935.46 103.34 L935.67 102.88 L935.89 102.47 L936.12 102.10 L936.35 101.79 L936.57 101.56 L936.80 101.40 L937.03 101.29 L937.29 101.21 L937.59 101.16 L937.93 101.11 L938.34 101.05 L938.85 101.00 L939.47 100.98 L940.17 100.97 L940.89 100.99 L941.59 101.01 L942.23 101.03 L942.77 101.04 L943.16 101.05 L1112.00 101.05" fill="none" stroke="#bab213" stroke-width="1.4" stroke-linejoin="round"/>
<rect x="911.00" y="80.80" width="201.00" height="177.80" fill="none" stroke="#9c9c9c" stroke-width="1"/>
<text x="908.40" y="244.50" font-size="8.3" fill="#b0b0b0" text-anchor="end" >0</text>
<text x="908.40" y="225.46" font-size="8.3" fill="#b0b0b0" text-anchor="end" >1000</text>
<text x="908.40" y="206.42" font-size="8.3" fill="#b0b0b0" text-anchor="end" >2000</text>
<text x="908.40" y="187.38" font-size="8.3" fill="#b0b0b0" text-anchor="end" >3000</text>
<text x="908.40" y="168.34" font-size="8.3" fill="#b0b0b0" text-anchor="end" >4000</text>
<text x="908.40" y="149.30" font-size="8.3" fill="#b0b0b0" text-anchor="end" >5000</text>
<text x="908.40" y="130.26" font-size="8.3" fill="#b0b0b0" text-anchor="end" >6000</text>
<text x="908.40" y="111.22" font-size="8.3" fill="#b0b0b0" text-anchor="end" >7000</text>
<text x="908.40" y="92.18" font-size="8.3" fill="#b0b0b0" text-anchor="end" >8000</text>
<text x="1011.50" y="77.20" font-size="10.3" fill="#c4c4c4" text-anchor="middle" >K_F_cy</text>
<rect x="1038.30" y="88.60" width="67.30" height="12.20" fill="#000" stroke="#bcbcbc" stroke-width="1.05" rx="0.8"/>
<line x1="1041.30" y1="94.70" x2="1072.20" y2="94.70" stroke="#bab213" stroke-width="1.3" opacity="0.88"/>
<text x="1074.70" y="98.60" font-size="8.1" fill="#e6e6e6" text-anchor="start" >K_F_cy</text>
<rect x="447.00" y="284.70" width="203.90" height="170.80" fill="#000" />
<line x1="487.78" y1="284.70" x2="487.78" y2="455.50" stroke="#383838" stroke-width="1" />
<line x1="528.56" y1="284.70" x2="528.56" y2="455.50" stroke="#383838" stroke-width="1" />
<line x1="569.34" y1="284.70" x2="569.34" y2="455.50" stroke="#383838" stroke-width="1" />
<line x1="610.12" y1="284.70" x2="610.12" y2="455.50" stroke="#383838" stroke-width="1" />
<line x1="447.00" y1="412.80" x2="650.90" y2="412.80" stroke="#383838" stroke-width="1" />
<line x1="447.00" y1="370.10" x2="650.90" y2="370.10" stroke="#383838" stroke-width="1" />
<line x1="447.00" y1="327.40" x2="650.90" y2="327.40" stroke="#383838" stroke-width="1" />
<line x1="487.78" y1="455.50" x2="487.78" y2="452.00" stroke="#808080" stroke-width="1" />
<line x1="487.78" y1="284.70" x2="487.78" y2="288.20" stroke="#808080" stroke-width="1" />
<line x1="528.56" y1="455.50" x2="528.56" y2="452.00" stroke="#808080" stroke-width="1" />
<line x1="528.56" y1="284.70" x2="528.56" y2="288.20" stroke="#808080" stroke-width="1" />
<line x1="569.34" y1="455.50" x2="569.34" y2="452.00" stroke="#808080" stroke-width="1" />
<line x1="569.34" y1="284.70" x2="569.34" y2="288.20" stroke="#808080" stroke-width="1" />
<line x1="610.12" y1="455.50" x2="610.12" y2="452.00" stroke="#808080" stroke-width="1" />
<line x1="610.12" y1="284.70" x2="610.12" y2="288.20" stroke="#808080" stroke-width="1" />
<line x1="447.00" y1="412.80" x2="450.50" y2="412.80" stroke="#808080" stroke-width="1" />
<line x1="650.90" y1="412.80" x2="647.40" y2="412.80" stroke="#808080" stroke-width="1" />
<line x1="447.00" y1="370.10" x2="450.50" y2="370.10" stroke="#808080" stroke-width="1" />
<line x1="650.90" y1="370.10" x2="647.40" y2="370.10" stroke="#808080" stroke-width="1" />
<line x1="447.00" y1="327.40" x2="450.50" y2="327.40" stroke="#808080" stroke-width="1" />
<line x1="650.90" y1="327.40" x2="647.40" y2="327.40" stroke="#808080" stroke-width="1" />
<path d="M447.00 370.10 L650.90 370.10" fill="none" stroke="#bab213" stroke-width="1.4" stroke-linejoin="round"/>
<rect x="447.00" y="284.70" width="203.90" height="170.80" fill="none" stroke="#9c9c9c" stroke-width="1"/>
<text x="447.00" y="465.80" font-size="8.3" fill="#b0b0b0" text-anchor="middle" >0</text>
<text x="487.78" y="465.80" font-size="8.3" fill="#b0b0b0" text-anchor="middle" >2</text>
<text x="528.56" y="465.80" font-size="8.3" fill="#b0b0b0" text-anchor="middle" >4</text>
<text x="569.34" y="465.80" font-size="8.3" fill="#b0b0b0" text-anchor="middle" >6</text>
<text x="610.12" y="465.80" font-size="8.3" fill="#b0b0b0" text-anchor="middle" >8</text>
<text x="650.90" y="465.80" font-size="8.3" fill="#b0b0b0" text-anchor="middle" >10</text>
<text x="444.40" y="459.10" font-size="8.3" fill="#b0b0b0" text-anchor="end" >-1</text>
<text x="444.40" y="416.40" font-size="8.3" fill="#b0b0b0" text-anchor="end" >-0.5</text>
<text x="444.40" y="373.70" font-size="8.3" fill="#b0b0b0" text-anchor="end" >0</text>
<text x="444.40" y="331.00" font-size="8.3" fill="#b0b0b0" text-anchor="end" >0.5</text>
<text x="444.40" y="288.30" font-size="8.3" fill="#b0b0b0" text-anchor="end" >1</text>
<text x="548.95" y="279.80" font-size="10.3" fill="#c4c4c4" text-anchor="middle" >K_a_cx</text>
<rect x="577.60" y="292.00" width="66.60" height="12.60" fill="#000" stroke="#bcbcbc" stroke-width="1.05" rx="0.8"/>
<line x1="581.30" y1="298.30" x2="611.40" y2="298.30" stroke="#bab213" stroke-width="1.3" opacity="0.88"/>
<text x="613.70" y="302.20" font-size="8.1" fill="#e6e6e6" text-anchor="start" >K_a_cx</text>
<rect x="675.50" y="284.70" width="205.70" height="170.80" fill="#000" />
<line x1="716.64" y1="284.70" x2="716.64" y2="455.50" stroke="#383838" stroke-width="1" />
<line x1="757.78" y1="284.70" x2="757.78" y2="455.50" stroke="#383838" stroke-width="1" />
<line x1="798.92" y1="284.70" x2="798.92" y2="455.50" stroke="#383838" stroke-width="1" />
<line x1="840.06" y1="284.70" x2="840.06" y2="455.50" stroke="#383838" stroke-width="1" />
<line x1="675.50" y1="438.90" x2="881.20" y2="438.90" stroke="#383838" stroke-width="1" />
<line x1="675.50" y1="409.50" x2="881.20" y2="409.50" stroke="#383838" stroke-width="1" />
<line x1="675.50" y1="380.10" x2="881.20" y2="380.10" stroke="#383838" stroke-width="1" />
<line x1="675.50" y1="350.70" x2="881.20" y2="350.70" stroke="#383838" stroke-width="1" />
<line x1="675.50" y1="321.30" x2="881.20" y2="321.30" stroke="#383838" stroke-width="1" />
<line x1="675.50" y1="291.90" x2="881.20" y2="291.90" stroke="#383838" stroke-width="1" />
<line x1="716.64" y1="455.50" x2="716.64" y2="452.00" stroke="#808080" stroke-width="1" />
<line x1="716.64" y1="284.70" x2="716.64" y2="288.20" stroke="#808080" stroke-width="1" />
<line x1="757.78" y1="455.50" x2="757.78" y2="452.00" stroke="#808080" stroke-width="1" />
<line x1="757.78" y1="284.70" x2="757.78" y2="288.20" stroke="#808080" stroke-width="1" />
<line x1="798.92" y1="455.50" x2="798.92" y2="452.00" stroke="#808080" stroke-width="1" />
<line x1="798.92" y1="284.70" x2="798.92" y2="288.20" stroke="#808080" stroke-width="1" />
<line x1="840.06" y1="455.50" x2="840.06" y2="452.00" stroke="#808080" stroke-width="1" />
<line x1="840.06" y1="284.70" x2="840.06" y2="288.20" stroke="#808080" stroke-width="1" />
<line x1="675.50" y1="438.90" x2="679.00" y2="438.90" stroke="#808080" stroke-width="1" />
<line x1="881.20" y1="438.90" x2="877.70" y2="438.90" stroke="#808080" stroke-width="1" />
<line x1="675.50" y1="409.50" x2="679.00" y2="409.50" stroke="#808080" stroke-width="1" />
<line x1="881.20" y1="409.50" x2="877.70" y2="409.50" stroke="#808080" stroke-width="1" />
<line x1="675.50" y1="380.10" x2="679.00" y2="380.10" stroke="#808080" stroke-width="1" />
<line x1="881.20" y1="380.10" x2="877.70" y2="380.10" stroke="#808080" stroke-width="1" />
<line x1="675.50" y1="350.70" x2="679.00" y2="350.70" stroke="#808080" stroke-width="1" />
<line x1="881.20" y1="350.70" x2="877.70" y2="350.70" stroke="#808080" stroke-width="1" />
<line x1="675.50" y1="321.30" x2="679.00" y2="321.30" stroke="#808080" stroke-width="1" />
<line x1="881.20" y1="321.30" x2="877.70" y2="321.30" stroke="#808080" stroke-width="1" />
<line x1="675.50" y1="291.90" x2="679.00" y2="291.90" stroke="#808080" stroke-width="1" />
<line x1="881.20" y1="291.90" x2="877.70" y2="291.90" stroke="#808080" stroke-width="1" />
<path d="M675.50 438.90 L695.76 438.90 L695.97 301.31 L695.97 301.31 L696.02 302.80 L696.09 304.71 L696.18 306.99 L696.27 309.56 L696.37 312.34 L696.48 315.28 L696.58 318.28 L696.69 321.30 L696.79 324.58 L696.90 328.30 L697.02 332.26 L697.14 336.29 L697.26 340.19 L697.38 343.78 L697.50 346.85 L697.61 349.23 L697.73 350.86 L697.84 351.90 L697.96 352.48 L698.07 352.72 L698.18 352.74 L698.30 352.68 L698.42 352.64 L698.54 352.76 L698.66 352.97 L698.77 353.11 L698.89 353.21 L699.01 353.25 L699.13 353.26 L699.26 353.22 L699.41 353.15 L699.57 353.05 L699.74 352.90 L699.92 352.68 L700.11 352.41 L700.31 352.11 L700.52 351.79 L700.74 351.49 L700.97 351.22 L701.21 350.99 L701.45 350.81 L701.67 350.64 L701.90 350.49 L702.14 350.36 L702.40 350.24 L702.71 350.13 L703.06 350.04 L703.48 349.96 L704.00 349.91 L704.64 349.87 L705.35 349.86 L706.09 349.86 L706.80 349.86 L707.46 349.87 L708.01 349.88 L708.41 349.88 L881.20 349.88" fill="none" stroke="#bab213" stroke-width="1.4" stroke-linejoin="round"/>
<rect x="675.50" y="284.70" width="205.70" height="170.80" fill="none" stroke="#9c9c9c" stroke-width="1"/>
<text x="675.50" y="465.80" font-size="8.3" fill="#b0b0b0" text-anchor="middle" >0</text>
<text x="716.64" y="465.80" font-size="8.3" fill="#b0b0b0" text-anchor="middle" >2</text>
<text x="757.78" y="465.80" font-size="8.3" fill="#b0b0b0" text-anchor="middle" >4</text>
<text x="798.92" y="465.80" font-size="8.3" fill="#b0b0b0" text-anchor="middle" >6</text>
<text x="840.06" y="465.80" font-size="8.3" fill="#b0b0b0" text-anchor="middle" >8</text>
<text x="881.20" y="465.80" font-size="8.3" fill="#b0b0b0" text-anchor="middle" >10</text>
<text x="672.90" y="442.50" font-size="8.3" fill="#b0b0b0" text-anchor="end" >0</text>
<text x="672.90" y="413.10" font-size="8.3" fill="#b0b0b0" text-anchor="end" >100</text>
<text x="672.90" y="383.70" font-size="8.3" fill="#b0b0b0" text-anchor="end" >200</text>
<text x="672.90" y="354.30" font-size="8.3" fill="#b0b0b0" text-anchor="end" >300</text>
<text x="672.90" y="324.90" font-size="8.3" fill="#b0b0b0" text-anchor="end" >400</text>
<text x="672.90" y="295.50" font-size="8.3" fill="#b0b0b0" text-anchor="end" >500</text>
<text x="778.35" y="279.80" font-size="10.3" fill="#c4c4c4" text-anchor="middle" >K_F_cx</text>
<rect x="807.90" y="292.00" width="67.10" height="13.00" fill="#000" stroke="#bcbcbc" stroke-width="1.05" rx="0.8"/>
<line x1="811.20" y1="298.50" x2="840.80" y2="298.50" stroke="#bab213" stroke-width="1.3" opacity="0.88"/>
<text x="843.60" y="302.40" font-size="8.1" fill="#e6e6e6" text-anchor="start" >K_F_cx</text>
<rect x="911.00" y="284.70" width="201.00" height="170.80" fill="#000" />
<line x1="951.20" y1="284.70" x2="951.20" y2="455.50" stroke="#383838" stroke-width="1" />
<line x1="991.40" y1="284.70" x2="991.40" y2="455.50" stroke="#383838" stroke-width="1" />
<line x1="1031.60" y1="284.70" x2="1031.60" y2="455.50" stroke="#383838" stroke-width="1" />
<line x1="1071.80" y1="284.70" x2="1071.80" y2="455.50" stroke="#383838" stroke-width="1" />
<line x1="911.00" y1="438.60" x2="1112.00" y2="438.60" stroke="#383838" stroke-width="1" />
<line x1="911.00" y1="420.90" x2="1112.00" y2="420.90" stroke="#383838" stroke-width="1" />
<line x1="911.00" y1="403.20" x2="1112.00" y2="403.20" stroke="#383838" stroke-width="1" />
<line x1="911.00" y1="385.50" x2="1112.00" y2="385.50" stroke="#383838" stroke-width="1" />
<line x1="911.00" y1="367.80" x2="1112.00" y2="367.80" stroke="#383838" stroke-width="1" />
<line x1="911.00" y1="350.10" x2="1112.00" y2="350.10" stroke="#383838" stroke-width="1" />
<line x1="911.00" y1="332.40" x2="1112.00" y2="332.40" stroke="#383838" stroke-width="1" />
<line x1="911.00" y1="314.70" x2="1112.00" y2="314.70" stroke="#383838" stroke-width="1" />
<line x1="911.00" y1="297.00" x2="1112.00" y2="297.00" stroke="#383838" stroke-width="1" />
<line x1="951.20" y1="455.50" x2="951.20" y2="452.00" stroke="#808080" stroke-width="1" />
<line x1="951.20" y1="284.70" x2="951.20" y2="288.20" stroke="#808080" stroke-width="1" />
<line x1="991.40" y1="455.50" x2="991.40" y2="452.00" stroke="#808080" stroke-width="1" />
<line x1="991.40" y1="284.70" x2="991.40" y2="288.20" stroke="#808080" stroke-width="1" />
<line x1="1031.60" y1="455.50" x2="1031.60" y2="452.00" stroke="#808080" stroke-width="1" />
<line x1="1031.60" y1="284.70" x2="1031.60" y2="288.20" stroke="#808080" stroke-width="1" />
<line x1="1071.80" y1="455.50" x2="1071.80" y2="452.00" stroke="#808080" stroke-width="1" />
<line x1="1071.80" y1="284.70" x2="1071.80" y2="288.20" stroke="#808080" stroke-width="1" />
<line x1="911.00" y1="438.60" x2="914.50" y2="438.60" stroke="#808080" stroke-width="1" />
<line x1="1112.00" y1="438.60" x2="1108.50" y2="438.60" stroke="#808080" stroke-width="1" />
<line x1="911.00" y1="420.90" x2="914.50" y2="420.90" stroke="#808080" stroke-width="1" />
<line x1="1112.00" y1="420.90" x2="1108.50" y2="420.90" stroke="#808080" stroke-width="1" />
<line x1="911.00" y1="403.20" x2="914.50" y2="403.20" stroke="#808080" stroke-width="1" />
<line x1="1112.00" y1="403.20" x2="1108.50" y2="403.20" stroke="#808080" stroke-width="1" />
<line x1="911.00" y1="385.50" x2="914.50" y2="385.50" stroke="#808080" stroke-width="1" />
<line x1="1112.00" y1="385.50" x2="1108.50" y2="385.50" stroke="#808080" stroke-width="1" />
<line x1="911.00" y1="367.80" x2="914.50" y2="367.80" stroke="#808080" stroke-width="1" />
<line x1="1112.00" y1="367.80" x2="1108.50" y2="367.80" stroke="#808080" stroke-width="1" />
<line x1="911.00" y1="350.10" x2="914.50" y2="350.10" stroke="#808080" stroke-width="1" />
<line x1="1112.00" y1="350.10" x2="1108.50" y2="350.10" stroke="#808080" stroke-width="1" />
<line x1="911.00" y1="332.40" x2="914.50" y2="332.40" stroke="#808080" stroke-width="1" />
<line x1="1112.00" y1="332.40" x2="1108.50" y2="332.40" stroke="#808080" stroke-width="1" />
<line x1="911.00" y1="314.70" x2="914.50" y2="314.70" stroke="#808080" stroke-width="1" />
<line x1="1112.00" y1="314.70" x2="1108.50" y2="314.70" stroke="#808080" stroke-width="1" />
<line x1="911.00" y1="297.00" x2="914.50" y2="297.00" stroke="#808080" stroke-width="1" />
<line x1="1112.00" y1="297.00" x2="1108.50" y2="297.00" stroke="#808080" stroke-width="1" />
<path d="M911.00 438.60 L931.10 438.60 L931.10 438.60 L931.13 435.31 L931.17 431.06 L931.22 426.03 L931.27 420.35 L931.33 414.18 L931.39 407.69 L931.44 401.03 L931.50 394.35 L931.56 387.24 L931.62 379.39 L931.67 371.07 L931.73 362.57 L931.80 354.17 L931.86 346.15 L931.93 338.80 L932.00 332.40 L932.08 326.74 L932.16 321.44 L932.25 316.59 L932.34 312.23 L932.43 308.44 L932.52 305.27 L932.61 302.80 L932.71 301.07 L932.80 300.30 L932.89 300.50 L932.98 301.49 L933.08 303.05 L933.18 305.00 L933.28 307.13 L933.39 309.25 L933.51 311.16 L933.64 313.06 L933.77 315.22 L933.91 317.55 L934.05 319.98 L934.20 322.41 L934.36 324.75 L934.54 326.93 L934.72 328.86 L934.91 330.58 L935.12 332.20 L935.33 333.72 L935.56 335.12 L935.79 336.40 L936.03 337.56 L936.28 338.59 L936.53 339.48 L936.77 340.20 L937.00 340.74 L937.23 341.14 L937.47 341.42 L937.73 341.61 L938.02 341.74 L938.35 341.85 L938.74 341.96 L939.22 342.03 L939.79 342.02 L940.43 341.96 L941.09 341.85 L941.73 341.72 L942.31 341.59 L942.80 341.49 L943.16 341.43 L1112.00 341.43" fill="none" stroke="#bab213" stroke-width="1.4" stroke-linejoin="round"/>
<rect x="911.00" y="284.70" width="201.00" height="170.80" fill="none" stroke="#9c9c9c" stroke-width="1"/>
<text x="911.00" y="465.80" font-size="8.3" fill="#b0b0b0" text-anchor="middle" >0</text>
<text x="951.20" y="465.80" font-size="8.3" fill="#b0b0b0" text-anchor="middle" >2</text>
<text x="991.40" y="465.80" font-size="8.3" fill="#b0b0b0" text-anchor="middle" >4</text>
<text x="1031.60" y="465.80" font-size="8.3" fill="#b0b0b0" text-anchor="middle" >6</text>
<text x="1071.80" y="465.80" font-size="8.3" fill="#b0b0b0" text-anchor="middle" >8</text>
<text x="1112.00" y="465.80" font-size="8.3" fill="#b0b0b0" text-anchor="middle" >10</text>
<text x="908.40" y="442.20" font-size="8.3" fill="#b0b0b0" text-anchor="end" >0</text>
<text x="908.40" y="424.50" font-size="8.3" fill="#b0b0b0" text-anchor="end" >1</text>
<text x="908.40" y="406.80" font-size="8.3" fill="#b0b0b0" text-anchor="end" >2</text>
<text x="908.40" y="389.10" font-size="8.3" fill="#b0b0b0" text-anchor="end" >3</text>
<text x="908.40" y="371.40" font-size="8.3" fill="#b0b0b0" text-anchor="end" >4</text>
<text x="908.40" y="353.70" font-size="8.3" fill="#b0b0b0" text-anchor="end" >5</text>
<text x="908.40" y="336.00" font-size="8.3" fill="#b0b0b0" text-anchor="end" >6</text>
<text x="908.40" y="318.30" font-size="8.3" fill="#b0b0b0" text-anchor="end" >7</text>
<text x="908.40" y="300.60" font-size="8.3" fill="#b0b0b0" text-anchor="end" >8</text>
<text x="1011.50" y="279.80" font-size="10.3" fill="#c4c4c4" text-anchor="middle" >beta</text>
<rect x="1050.40" y="292.00" width="55.00" height="12.70" fill="#000" stroke="#bcbcbc" stroke-width="1.05" rx="0.8"/>
<line x1="1054.00" y1="298.35" x2="1084.50" y2="298.35" stroke="#bab213" stroke-width="1.3" opacity="0.88"/>
<text x="1086.80" y="302.25" font-size="8.1" fill="#e6e6e6" text-anchor="start" >beta</text>
<text x="911.80" y="281.70" font-size="8.3" fill="#b0b0b0" text-anchor="start" >×10</text>
<text x="925.80" y="278.30" font-size="6.4" fill="#b0b0b0" text-anchor="start" >-3</text>
<rect x="1113.40" y="66.40" width="9.20" height="6.80" fill="#3a3a3a" stroke="#c6c6c6" stroke-width="1.0"/>
<path d="M1115.60 70.30l2.4 -2.5l2.4 2.5h-1.3v1.5h-2.2v-1.5z" fill="#f0f0f0"/>
<rect x="429.20" y="471.30" width="693.30" height="17.40" fill="#f0f0f0" />
<rect x="429.20" y="471.30" width="693.30" height="0.90" fill="#fbfbfb" />
<text x="429.60" y="484.20" font-size="8.0" fill="#141414" text-anchor="start" stroke="#141414" stroke-width="0.18">Ready</text>
<rect x="1023.80" y="475.20" width="57.40" height="13.00" fill="#f3f3f3" stroke="#d4d4d4" stroke-width="0.9"/>
<text x="1025.70" y="484.20" font-size="7.9" fill="#141414" text-anchor="start" stroke="#141414" stroke-width="0.18">Sample based</text>
<rect x="1083.20" y="475.20" width="38.60" height="13.00" fill="#f3f3f3" stroke="#d4d4d4" stroke-width="0.9"/>
<text x="1084.80" y="484.20" font-size="7.8" fill="#141414" text-anchor="start" stroke="#141414" stroke-width="0.18">T=10.000</text>
<rect x="429.20" y="488.60" width="693.30" height="1.40" fill="#b9c9d6" />
<rect x="1125.30" y="0.00" width="473.70" height="42.50" fill="#ffffff" />
<rect x="1131.25" y="6.60" width="12.20" height="11.20" fill="#f4f4f4" stroke="#a4a8ad" stroke-width="0.9" rx="0.6"/>
<rect x="1131.75" y="8.60" width="11.20" height="6.00" fill="#ffffff" />
<rect x="1131.55" y="6.80" width="11.60" height="1.50" fill="#4f7db0" />
<path d="M1133.15 13.50L1136.95 11.20L1137.85 13.20L1136.75 15.80L1135.35 14.60Z" fill="#3f82c8"/>
<path d="M1136.95 11.20C1137.65 10.50 1138.15 9.60 1138.65 9.30C1139.55 10.40 1140.35 12.90 1141.45 15.00C1140.35 14.30 1139.35 14.90 1138.45 15.80L1137.15 16.60L1136.75 15.80L1137.85 13.20Z" fill="#ee7a22"/>
<path d="M1138.65 9.30C1139.55 10.40 1140.35 12.90 1141.45 15.00C1140.65 14.40 1139.95 14.50 1139.35 14.90C1139.15 13.10 1138.95 11.10 1138.65 9.30Z" fill="#b5311c"/>
<path d="M1136.75 15.80L1137.85 13.20L1136.95 11.20L1136.15 14.00Z" fill="#2a4f9a" opacity="0.75"/>
<text transform="translate(1146.20 15.50) scale(0.925 1)" font-size="9.5" fill="#9a9a9a">Scope</text>
<line x1="1504.80" y1="11.70" x2="1512.20" y2="11.70" stroke="#b4b4b4" stroke-width="1" />
<rect x="1541.00" y="8.20" width="7.00" height="7.00" fill="none" stroke="#a6a6a6" stroke-width="0.9"/>
<path d="M1578.00 8.10l7.2 7.2M1585.20 8.10l-7.2 7.2" stroke="#a8a8a8" stroke-width="0.9"/>
<g transform="translate(1125.30 0) scale(1.028 1) translate(-1125.30 0)">
<text x="1130.50" y="35.60" font-size="9.3" fill="#1e1e1e" text-anchor="start" >File</text>
<text x="1154.50" y="35.60" font-size="9.3" fill="#1e1e1e" text-anchor="start" >Tools</text>
<text x="1186.50" y="35.60" font-size="9.3" fill="#1e1e1e" text-anchor="start" >View</text>
<text x="1216.30" y="35.60" font-size="9.3" fill="#1e1e1e" text-anchor="start" >Simulation</text>
<text x="1269.50" y="35.60" font-size="9.3" fill="#1e1e1e" text-anchor="start" >Help</text>
</g>
<path d="M1592.40 31.10l2.6 2.6" stroke="#111" stroke-width="1.7"/>
<path d="M1596.80 30.90v4.2h-4.2z" fill="#111"/>
<rect x="1125.30" y="41.50" width="473.70" height="1.00" fill="#cfcfcf" />
<rect x="1125.30" y="42.50" width="473.70" height="20.20" fill="#f0f0f0" />
<rect x="1125.30" y="61.90" width="473.70" height="1.00" fill="#f8f8f8" />
<g transform="translate(1125.30 0) scale(1.028 1) translate(-1125.30 0)">
<circle cx="1134.70" cy="51.50" r="5.1" fill="none" stroke="#8c8c8c" stroke-width="1.2" stroke-dasharray="2.0 1.2"/>
<circle cx="1134.70" cy="51.50" r="4.5" fill="#878787"/>
<circle cx="1134.70" cy="51.50" r="3.1" fill="#b9b9b9"/>
<circle cx="1134.70" cy="51.50" r="2.5" fill="#7c7c7c"/>
<circle cx="1134.70" cy="51.50" r="1.5" fill="#fafafa"/>
<path d="M1145.30 50.20h4.4l-2.2 2.2z" fill="#333"/>
<line x1="1153.30" y1="43.70" x2="1153.30" y2="59.20" stroke="#c9c9c9" stroke-width="1" />
<path d="M1159.50 50.70l8.5 -5v3.2h1.3v4.5h-1.3v2.6z" fill="#8dbbe6" stroke="#3f7fc0" stroke-width="0.9"/>
<circle cx="1167.60" cy="53.80" r="3.0" fill="#909090" stroke="#6a6a6a" stroke-width="0.8"/>
<circle cx="1167.60" cy="53.80" r="1.2" fill="#5a5a5a"/>
<circle cx="1181.70" cy="51.20" r="5.6" fill="#b8e986" stroke="#5ea524" stroke-width="1.5"/>
<circle cx="1181.20" cy="50.40" r="3.4" fill="#e9f9d4"/>
<path d="M1180.00 48.50l4.6 2.7l-4.6 2.7z" fill="#2b2b2b"/>
<rect x="1194.50" y="46.50" width="1.90" height="9.40" fill="#2f74b5" />
<path d="M1197.50 46.50l6.3 4.7l-6.3 4.7z" fill="#7fb6e6" stroke="#2f74b5" stroke-width="0.9"/>
<rect x="1210.00" y="45.30" width="11.80" height="11.80" fill="#a4a4a4" rx="4.2"/>
<rect x="1213.30" y="48.60" width="5.20" height="5.20" fill="#868686" rx="0.8"/>
<line x1="1226.30" y1="43.70" x2="1226.30" y2="59.20" stroke="#c9c9c9" stroke-width="1" />
<rect x="1232.60" y="45.60" width="5.60" height="3.60" fill="#f08a24" rx="1.2"/>
<rect x="1234.00" y="46.50" width="2.80" height="1.40" fill="#ffd9a8" rx="0.6"/>
<path d="M1238.30 47.40h2v2.6" fill="none" stroke="#d9642a" stroke-width="0.9"/>
<path d="M1237.70 51.40l2.6 -2l2.6 2l-2.6 2z" fill="#fff" stroke="#6a6a6a" stroke-width="0.8"/>
<path d="M1242.90 51.40h1.6" fill="none" stroke="#6a6a6a" stroke-width="0.8"/>
<path d="M1240.30 53.40v1.6h-2" fill="none" stroke="#6a6a6a" stroke-width="0.8"/>
<ellipse cx="1235.70" cy="55.20" rx="2.9" ry="1.6" fill="#fff" stroke="#6a6a6a" stroke-width="0.8"/>
<path d="M1248.90 50.20h4.4l-2.2 2.2z" fill="#333"/>
<line x1="1256.70" y1="43.70" x2="1256.70" y2="59.20" stroke="#c9c9c9" stroke-width="1" />
<line x1="1270.10" y1="53.20" x2="1273.80" y2="56.80" stroke="#2e2e2e" stroke-width="2.1" stroke-linecap="round"/>
<circle cx="1267.50" cy="50.40" r="3.7" fill="#f4f8fc" stroke="#6e6e6e" stroke-width="1.1"/>
<path d="M1265.70 50.40h3.6M1267.50 48.60v3.6" stroke="#3a4a66" stroke-width="1.1"/>
<path d="M1279.40 50.20h4.4l-2.2 2.2z" fill="#333"/>
<line x1="1287.30" y1="43.70" x2="1287.30" y2="59.20" stroke="#c9c9c9" stroke-width="1" />
<rect x="1293.30" y="46.00" width="12.20" height="11.40" fill="#ececec" stroke="#5c5c5c" stroke-width="1"/>
<rect x="1294.50" y="47.20" width="9.80" height="6.00" fill="#fafafa" />
<path d="M1294.70 47.20L1304.10 56.20M1304.10 47.20L1294.70 56.20" stroke="#c4c4c4" stroke-width="1.1"/>
<path d="M1294.20 51.70l2.3 -1.7v3.4zM1304.60 51.70l-2.3 -1.7v3.4z" fill="#303030"/>
<path d="M1299.40 46.50l1.8 2.3h-3.6zM1299.40 56.90l1.8 -2.3h-3.6z" fill="#303030"/>
<path d="M1309.90 50.20h4.4l-2.2 2.2z" fill="#333"/>
<line x1="1317.70" y1="43.70" x2="1317.70" y2="59.20" stroke="#c9c9c9" stroke-width="1" />
<rect x="1327.70" y="45.50" width="6.10" height="1.50" fill="#2c2c2c" />
<path d="M1328.80 46.70L1333.10 52.10L1324.40 52.10Z" fill="#5a5a5a" stroke="#262626" stroke-width="0.9" stroke-linejoin="round"/>
<rect x="1327.60" y="52.10" width="2.40" height="4.40" fill="#2c2c2c" />
<rect x="1323.70" y="54.60" width="6.30" height="2.00" fill="#262626" />
<rect x="1341.10" y="46.00" width="11.80" height="11.40" fill="#fbfbfb" stroke="#8a8a8a" stroke-width="0.9"/>
<path d="M1352.90 49.80v7.6h-7.6z" fill="#d2d2d2"/>
<path d="M1342.30 55.40l8.2 -8.8l2.1 2l-8.2 8.8z" fill="#86c2e6" stroke="#4a88ba" stroke-width="0.8"/>
<path d="M1344.90 53.80l0.9 0.9M1346.80 51.80l0.9 0.9M1348.70 49.80l0.9 0.9" stroke="#3d6f9c" stroke-width="0.6"/>
<path d="M1357.40 50.20h4.4l-2.2 2.2z" fill="#333"/>
</g>
<rect x="1125.30" y="0.95" width="473.70" height="0.80" fill="#7e7e7e" />
<line x1="1133.45" y1="0.00" x2="1133.45" y2="0.90" stroke="#9a9a9a" stroke-width="0.9" />
<line x1="1196.30" y1="0.00" x2="1196.30" y2="0.90" stroke="#9a9a9a" stroke-width="0.9" />
<line x1="1259.15" y1="0.00" x2="1259.15" y2="0.90" stroke="#9a9a9a" stroke-width="0.9" />
<line x1="1322.00" y1="0.00" x2="1322.00" y2="0.90" stroke="#9a9a9a" stroke-width="0.9" />
<line x1="1384.85" y1="0.00" x2="1384.85" y2="0.90" stroke="#9a9a9a" stroke-width="0.9" />
<line x1="1447.70" y1="0.00" x2="1447.70" y2="0.90" stroke="#9a9a9a" stroke-width="0.9" />
<line x1="1510.55" y1="0.00" x2="1510.55" y2="0.90" stroke="#9a9a9a" stroke-width="0.9" />
<line x1="1573.40" y1="0.00" x2="1573.40" y2="0.90" stroke="#9a9a9a" stroke-width="0.9" />
<line x1="1636.25" y1="0.00" x2="1636.25" y2="0.90" stroke="#9a9a9a" stroke-width="0.9" />
<rect x="1125.90" y="62.80" width="473.70" height="407.80" fill="#262626" />
<rect x="1125.00" y="0.60" width="1.10" height="490.00" fill="#8a8a8a" />
<rect x="1137.30" y="78.70" width="453.30" height="375.70" fill="#000" />
<line x1="1182.55" y1="78.70" x2="1182.55" y2="454.40" stroke="#383838" stroke-width="1" />
<line x1="1227.80" y1="78.70" x2="1227.80" y2="454.40" stroke="#383838" stroke-width="1" />
<line x1="1273.05" y1="78.70" x2="1273.05" y2="454.40" stroke="#383838" stroke-width="1" />
<line x1="1318.30" y1="78.70" x2="1318.30" y2="454.40" stroke="#383838" stroke-width="1" />
<line x1="1363.55" y1="78.70" x2="1363.55" y2="454.40" stroke="#383838" stroke-width="1" />
<line x1="1408.80" y1="78.70" x2="1408.80" y2="454.40" stroke="#383838" stroke-width="1" />
<line x1="1454.05" y1="78.70" x2="1454.05" y2="454.40" stroke="#383838" stroke-width="1" />
<line x1="1499.30" y1="78.70" x2="1499.30" y2="454.40" stroke="#383838" stroke-width="1" />
<line x1="1544.55" y1="78.70" x2="1544.55" y2="454.40" stroke="#383838" stroke-width="1" />
<line x1="1137.30" y1="403.30" x2="1590.60" y2="403.30" stroke="#383838" stroke-width="1" />
<line x1="1137.30" y1="345.10" x2="1590.60" y2="345.10" stroke="#383838" stroke-width="1" />
<line x1="1137.30" y1="286.90" x2="1590.60" y2="286.90" stroke="#383838" stroke-width="1" />
<line x1="1137.30" y1="228.70" x2="1590.60" y2="228.70" stroke="#383838" stroke-width="1" />
<line x1="1137.30" y1="170.50" x2="1590.60" y2="170.50" stroke="#383838" stroke-width="1" />
<line x1="1137.30" y1="112.30" x2="1590.60" y2="112.30" stroke="#383838" stroke-width="1" />
<line x1="1182.55" y1="454.40" x2="1182.55" y2="450.90" stroke="#808080" stroke-width="1" />
<line x1="1182.55" y1="78.70" x2="1182.55" y2="82.20" stroke="#808080" stroke-width="1" />
<line x1="1227.80" y1="454.40" x2="1227.80" y2="450.90" stroke="#808080" stroke-width="1" />
<line x1="1227.80" y1="78.70" x2="1227.80" y2="82.20" stroke="#808080" stroke-width="1" />
<line x1="1273.05" y1="454.40" x2="1273.05" y2="450.90" stroke="#808080" stroke-width="1" />
<line x1="1273.05" y1="78.70" x2="1273.05" y2="82.20" stroke="#808080" stroke-width="1" />
<line x1="1318.30" y1="454.40" x2="1318.30" y2="450.90" stroke="#808080" stroke-width="1" />
<line x1="1318.30" y1="78.70" x2="1318.30" y2="82.20" stroke="#808080" stroke-width="1" />
<line x1="1363.55" y1="454.40" x2="1363.55" y2="450.90" stroke="#808080" stroke-width="1" />
<line x1="1363.55" y1="78.70" x2="1363.55" y2="82.20" stroke="#808080" stroke-width="1" />
<line x1="1408.80" y1="454.40" x2="1408.80" y2="450.90" stroke="#808080" stroke-width="1" />
<line x1="1408.80" y1="78.70" x2="1408.80" y2="82.20" stroke="#808080" stroke-width="1" />
<line x1="1454.05" y1="454.40" x2="1454.05" y2="450.90" stroke="#808080" stroke-width="1" />
<line x1="1454.05" y1="78.70" x2="1454.05" y2="82.20" stroke="#808080" stroke-width="1" />
<line x1="1499.30" y1="454.40" x2="1499.30" y2="450.90" stroke="#808080" stroke-width="1" />
<line x1="1499.30" y1="78.70" x2="1499.30" y2="82.20" stroke="#808080" stroke-width="1" />
<line x1="1544.55" y1="454.40" x2="1544.55" y2="450.90" stroke="#808080" stroke-width="1" />
<line x1="1544.55" y1="78.70" x2="1544.55" y2="82.20" stroke="#808080" stroke-width="1" />
<line x1="1137.30" y1="403.30" x2="1140.80" y2="403.30" stroke="#808080" stroke-width="1" />
<line x1="1590.60" y1="403.30" x2="1587.10" y2="403.30" stroke="#808080" stroke-width="1" />
<line x1="1137.30" y1="345.10" x2="1140.80" y2="345.10" stroke="#808080" stroke-width="1" />
<line x1="1590.60" y1="345.10" x2="1587.10" y2="345.10" stroke="#808080" stroke-width="1" />
<line x1="1137.30" y1="286.90" x2="1140.80" y2="286.90" stroke="#808080" stroke-width="1" />
<line x1="1590.60" y1="286.90" x2="1587.10" y2="286.90" stroke="#808080" stroke-width="1" />
<line x1="1137.30" y1="228.70" x2="1140.80" y2="228.70" stroke="#808080" stroke-width="1" />
<line x1="1590.60" y1="228.70" x2="1587.10" y2="228.70" stroke="#808080" stroke-width="1" />
<line x1="1137.30" y1="170.50" x2="1140.80" y2="170.50" stroke="#808080" stroke-width="1" />
<line x1="1590.60" y1="170.50" x2="1587.10" y2="170.50" stroke="#808080" stroke-width="1" />
<line x1="1137.30" y1="112.30" x2="1140.80" y2="112.30" stroke="#808080" stroke-width="1" />
<line x1="1590.60" y1="112.30" x2="1587.10" y2="112.30" stroke="#808080" stroke-width="1" />
<path d="M1137.30 403.30 L1182.55 403.30 L1182.55 403.30 L1182.72 398.13 L1182.95 391.26 L1183.22 383.08 L1183.53 373.98 L1183.85 364.37 L1184.18 354.63 L1184.51 345.17 L1184.81 336.37 L1185.11 327.94 L1185.42 319.36 L1185.73 310.73 L1186.05 302.14 L1186.36 293.68 L1186.67 285.45 L1186.97 277.53 L1187.26 270.02 L1187.53 262.98 L1187.80 256.35 L1188.06 250.03 L1188.31 243.94 L1188.56 237.98 L1188.81 232.06 L1189.07 226.09 L1189.34 219.97 L1189.61 213.60 L1189.90 207.02 L1190.19 200.35 L1190.49 193.74 L1190.78 187.32 L1191.06 181.22 L1191.34 175.57 L1191.60 170.50 L1191.85 166.04 L1192.08 162.07 L1192.31 158.52 L1192.52 155.31 L1192.74 152.35 L1192.96 149.59 L1193.18 146.93 L1193.41 144.31 L1193.64 141.78 L1193.87 139.44 L1194.10 137.28 L1194.33 135.26 L1194.57 133.39 L1194.82 131.64 L1195.08 129.99 L1195.36 128.42 L1195.65 126.97 L1195.95 125.65 L1196.27 124.45 L1196.60 123.37 L1196.93 122.38 L1197.27 121.48 L1197.60 120.64 L1197.93 119.87 L1198.27 119.17 L1198.61 118.58 L1198.95 118.07 L1199.30 117.64 L1199.64 117.27 L1199.98 116.94 L1200.32 116.65 L1200.65 116.37 L1200.97 116.12 L1201.28 115.92 L1201.58 115.75 L1201.88 115.63 L1202.18 115.54 L1202.49 115.49 L1202.81 115.48 L1203.14 115.50 L1203.47 115.55 L1203.81 115.63 L1204.14 115.74 L1204.48 115.88 L1204.84 116.07 L1205.22 116.31 L1205.63 116.61 L1206.08 116.96 L1206.57 117.39 L1207.10 117.92 L1207.66 118.51 L1208.24 119.14 L1208.84 119.79 L1209.44 120.43 L1210.03 121.05 L1210.61 121.61 L1211.17 122.14 L1211.73 122.65 L1212.28 123.16 L1212.84 123.65 L1213.40 124.12 L1213.97 124.57 L1214.54 125.00 L1215.13 125.39 L1215.73 125.77 L1216.33 126.11 L1216.94 126.44 L1217.56 126.74 L1218.19 127.02 L1218.82 127.28 L1219.46 127.51 L1220.11 127.72 L1220.69 127.91 L1221.19 128.07 L1221.65 128.20 L1222.14 128.31 L1222.72 128.41 L1223.44 128.48 L1224.36 128.55 L1225.54 128.60 L1226.91 128.63 L1228.39 128.63 L1230.02 128.62 L1231.82 128.59 L1233.82 128.55 L1236.06 128.51 L1238.57 128.48 L1241.38 128.45 L1244.79 128.43 L1248.92 128.41 L1253.49 128.39 L1258.20 128.37 L1262.80 128.35 L1266.99 128.33 L1270.50 128.32 L1273.05 128.31 L1590.40 128.31" fill="none" stroke="#bab213" stroke-width="1.5" stroke-linejoin="round"/>
<path d="M1137.30 403.30 L1182.55 403.30 L1182.55 403.30 L1182.65 403.16 L1182.79 402.97 L1182.95 402.74 L1183.13 402.49 L1183.33 402.23 L1183.52 401.98 L1183.72 401.75 L1183.91 401.55 L1184.09 401.38 L1184.28 401.20 L1184.47 401.03 L1184.66 400.87 L1184.85 400.74 L1185.05 400.63 L1185.25 400.56 L1185.45 400.54 L1185.65 400.56 L1185.86 400.63 L1186.07 400.74 L1186.28 400.87 L1186.49 401.03 L1186.69 401.20 L1186.89 401.38 L1187.08 401.55 L1187.24 401.72 L1187.37 401.87 L1187.49 402.03 L1187.61 402.20 L1187.74 402.40 L1187.89 402.64 L1188.09 402.94 L1188.34 403.30 L1188.65 403.74 L1189.00 404.27 L1189.39 404.85 L1189.81 405.46 L1190.25 406.10 L1190.70 406.74 L1191.15 407.37 L1191.60 407.96 L1192.04 408.52 L1192.49 409.09 L1192.94 409.66 L1193.40 410.22 L1193.88 410.77 L1194.38 411.31 L1194.90 411.83 L1195.45 412.32 L1196.04 412.80 L1196.67 413.28 L1197.33 413.75 L1198.01 414.19 L1198.69 414.62 L1199.36 415.01 L1200.02 415.36 L1200.65 415.67 L1201.25 415.92 L1201.83 416.13 L1202.40 416.30 L1202.95 416.44 L1203.51 416.55 L1204.06 416.65 L1204.61 416.74 L1205.17 416.83 L1205.71 416.91 L1206.20 416.98 L1206.67 417.03 L1207.15 417.07 L1207.67 417.10 L1208.25 417.12 L1208.92 417.14 L1209.70 417.15 L1210.58 417.16 L1211.54 417.16 L1212.56 417.15 L1213.66 417.13 L1214.83 417.11 L1216.06 417.08 L1217.37 417.06 L1218.75 417.04 L1220.17 417.01 L1221.61 416.98 L1223.11 416.94 L1224.69 416.90 L1226.37 416.86 L1228.19 416.83 L1230.16 416.80 L1232.33 416.77 L1234.87 416.76 L1237.88 416.74 L1241.14 416.73 L1244.49 416.73 L1247.73 416.72 L1250.67 416.72 L1253.14 416.72 L1254.95 416.72 L1590.40 416.72" fill="none" stroke="#1a6eae" stroke-width="1.5" stroke-linejoin="round"/>
<rect x="1137.30" y="78.70" width="453.30" height="375.70" fill="none" stroke="#9c9c9c" stroke-width="1"/>
<text x="1137.30" y="465.60" font-size="8.3" fill="#b0b0b0" text-anchor="middle" >0</text>
<text x="1182.55" y="465.60" font-size="8.3" fill="#b0b0b0" text-anchor="middle" >1</text>
<text x="1227.80" y="465.60" font-size="8.3" fill="#b0b0b0" text-anchor="middle" >2</text>
<text x="1273.05" y="465.60" font-size="8.3" fill="#b0b0b0" text-anchor="middle" >3</text>
<text x="1318.30" y="465.60" font-size="8.3" fill="#b0b0b0" text-anchor="middle" >4</text>
<text x="1363.55" y="465.60" font-size="8.3" fill="#b0b0b0" text-anchor="middle" >5</text>
<text x="1408.80" y="465.60" font-size="8.3" fill="#b0b0b0" text-anchor="middle" >6</text>
<text x="1454.05" y="465.60" font-size="8.3" fill="#b0b0b0" text-anchor="middle" >7</text>
<text x="1499.30" y="465.60" font-size="8.3" fill="#b0b0b0" text-anchor="middle" >8</text>
<text x="1544.55" y="465.60" font-size="8.3" fill="#b0b0b0" text-anchor="middle" >9</text>
<text x="1590.40" y="465.60" font-size="8.3" fill="#b0b0b0" text-anchor="middle" >10</text>
<text x="1134.70" y="406.90" font-size="8.3" fill="#b0b0b0" text-anchor="end" >0</text>
<text x="1134.70" y="348.70" font-size="8.3" fill="#b0b0b0" text-anchor="end" >2</text>
<text x="1134.70" y="290.50" font-size="8.3" fill="#b0b0b0" text-anchor="end" >4</text>
<text x="1134.70" y="232.30" font-size="8.3" fill="#b0b0b0" text-anchor="end" >6</text>
<text x="1134.70" y="174.10" font-size="8.3" fill="#b0b0b0" text-anchor="end" >8</text>
<text x="1134.70" y="115.90" font-size="8.3" fill="#b0b0b0" text-anchor="end" >10</text>
<text x="1363.95" y="75.00" font-size="10.4" fill="#c4c4c4" text-anchor="middle" >ESM_psip_f64, ESM_beta_f64</text>
<rect x="1486.30" y="86.50" width="95.90" height="23.20" fill="#000" stroke="#bcbcbc" stroke-width="1.05" rx="0.8"/>
<line x1="1489.20" y1="93.00" x2="1520.50" y2="93.00" stroke="#bab213" stroke-width="1.3" opacity="0.88"/>
<text x="1523.00" y="96.40" font-size="8.2" fill="#e6e6e6" text-anchor="start" >ESM_psip_f64</text>
<line x1="1489.20" y1="103.20" x2="1520.50" y2="103.20" stroke="#1a6eae" stroke-width="1.3" opacity="0.88"/>
<text x="1523.00" y="107.30" font-size="8.2" fill="#e6e6e6" text-anchor="start" >ESM_beta_f64</text>
<rect x="1589.00" y="64.40" width="9.20" height="6.80" fill="#3a3a3a" stroke="#c6c6c6" stroke-width="1.0"/>
<path d="M1591.20 68.30l2.4 -2.5l2.4 2.5h-1.3v1.5h-2.2v-1.5z" fill="#f0f0f0"/>
<rect x="1125.90" y="470.60" width="473.70" height="18.00" fill="#f0f0f0" />
<rect x="1125.90" y="470.60" width="473.70" height="0.90" fill="#fbfbfb" />
<text x="1126.90" y="483.40" font-size="8.2" fill="#141414" text-anchor="start" stroke="#141414" stroke-width="0.18">Ready</text>
<rect x="1496.80" y="474.40" width="58.70" height="13.00" fill="#f3f3f3" stroke="#d4d4d4" stroke-width="0.9"/>
<text x="1498.50" y="483.40" font-size="8.15" fill="#141414" text-anchor="start" stroke="#141414" stroke-width="0.18">Sample based</text>
<rect x="1558.40" y="474.40" width="39.80" height="13.00" fill="#f3f3f3" stroke="#d4d4d4" stroke-width="0.9"/>
<text x="1560.20" y="483.40" font-size="8.05" fill="#141414" text-anchor="start" stroke="#141414" stroke-width="0.18">T=10.000</text>
<rect x="1125.30" y="488.70" width="473.70" height="1.30" fill="#a6a6a6" />
<line x1="65.00" y1="0.00" x2="65.00" y2="2.40" stroke="#b4b4b4" stroke-width="0.9" />
<line x1="127.85" y1="0.00" x2="127.85" y2="2.40" stroke="#b4b4b4" stroke-width="0.9" />
<line x1="190.70" y1="0.00" x2="190.70" y2="2.40" stroke="#b4b4b4" stroke-width="0.9" />
<line x1="253.55" y1="0.00" x2="253.55" y2="2.40" stroke="#b4b4b4" stroke-width="0.9" />
<line x1="316.40" y1="0.00" x2="316.40" y2="2.40" stroke="#b4b4b4" stroke-width="0.9" />
<line x1="379.25" y1="0.00" x2="379.25" y2="2.40" stroke="#b4b4b4" stroke-width="0.9" />
<line x1="442.10" y1="0.00" x2="442.10" y2="2.40" stroke="#b4b4b4" stroke-width="0.9" />
<line x1="504.95" y1="0.00" x2="504.95" y2="2.40" stroke="#b4b4b4" stroke-width="0.9" />
<line x1="567.80" y1="0.00" x2="567.80" y2="2.40" stroke="#b4b4b4" stroke-width="0.9" />
<line x1="630.65" y1="0.00" x2="630.65" y2="2.40" stroke="#b4b4b4" stroke-width="0.9" />
<line x1="693.50" y1="0.00" x2="693.50" y2="2.40" stroke="#b4b4b4" stroke-width="0.9" />
<line x1="756.35" y1="0.00" x2="756.35" y2="2.40" stroke="#b4b4b4" stroke-width="0.9" />
<line x1="819.20" y1="0.00" x2="819.20" y2="2.40" stroke="#b4b4b4" stroke-width="0.9" />
<line x1="882.05" y1="0.00" x2="882.05" y2="2.40" stroke="#b4b4b4" stroke-width="0.9" />
<line x1="944.90" y1="0.00" x2="944.90" y2="2.40" stroke="#b4b4b4" stroke-width="0.9" />
<line x1="1007.75" y1="0.00" x2="1007.75" y2="2.40" stroke="#b4b4b4" stroke-width="0.9" />
<line x1="1070.60" y1="0.00" x2="1070.60" y2="2.40" stroke="#b4b4b4" stroke-width="0.9" />
</g></svg>
</body></html>
